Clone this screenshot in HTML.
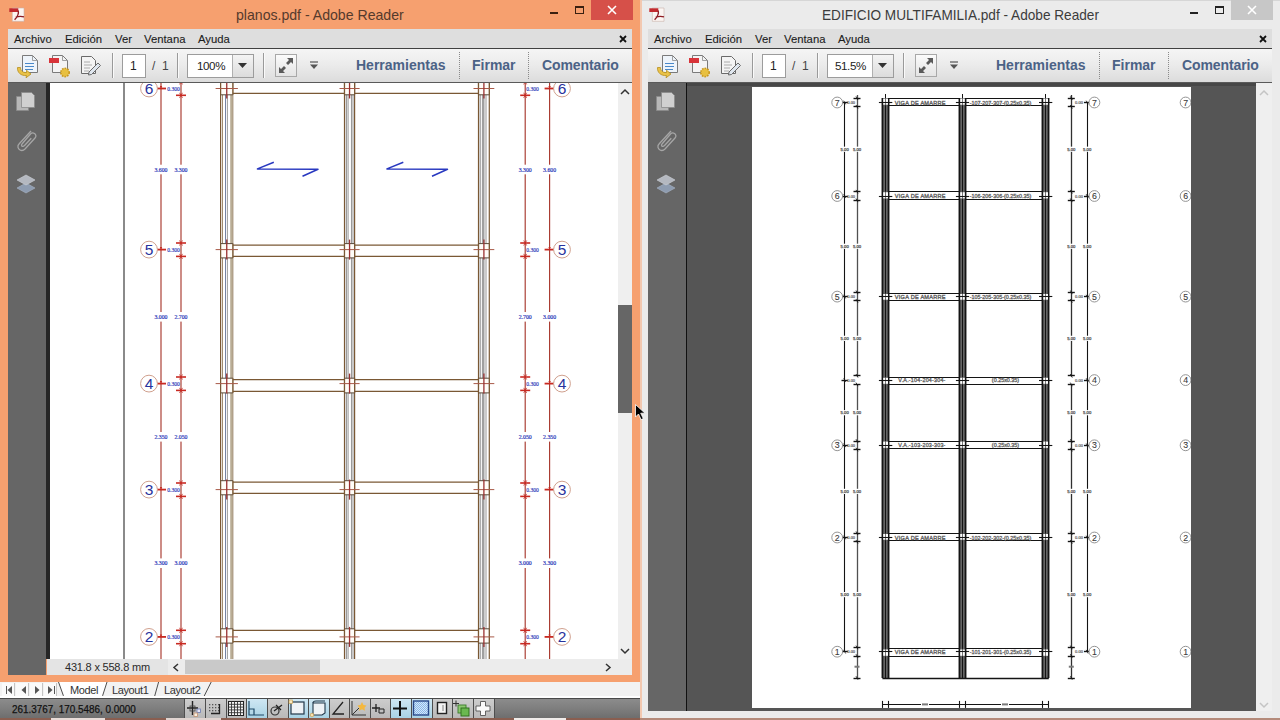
<!DOCTYPE html>
<html><head><meta charset="utf-8">
<style>
*{margin:0;padding:0;box-sizing:border-box}
html,body{width:1280px;height:720px;overflow:hidden;background:#efefef;font-family:"Liberation Sans",sans-serif}
.a{position:absolute}
.t{position:absolute;white-space:nowrap;line-height:1}
svg{position:absolute;overflow:visible}
</style></head><body>

<div class="a" style="left:0px;top:0px;width:640px;height:682px;background:#f6a06f;"></div>
<svg style="left:8px;top:6px" width="18" height="18" viewBox="0 0 18 18"><path d="M4.3 2h11.7v13.3h-11.7z" fill="#fbf5f2" stroke="#c8b0a8" stroke-width="0.6"/><rect x="1.3" y="2.3" width="9" height="3.7" fill="#c22a2e"/><path d="M10.2 4.5c.8 3-1 6.5-3.6 9.3 M7.8 11.2c2.6-1 5.5-1.2 8.2-.3" fill="none" stroke="#8e1a22" stroke-width="1.3"/></svg>
<div class="t" style="left:236px;top:8px;font-size:14.1px;color:#553a2c">planos.pdf - Adobe Reader</div>
<div class="a" style="left:591px;top:0px;width:42px;height:20px;background:#d65049;"></div>
<svg style="left:607px;top:5px" width="10" height="10" viewBox="0 0 10 10"><path d="M1 1L9 9M9 1L1 9" stroke="#fff" stroke-width="1.6"/></svg>
<div class="a" style="left:550px;top:12px;width:8px;height:2px;background:#3a2010;"></div>
<div class="a" style="left:575px;top:6px;width:9px;height:8px;border:1px solid #3a2010;border-top-width:2px"></div>
<div class="a" style="left:8px;top:48px;width:624px;height:35px;background:linear-gradient(#f5f5f5,#ececec 45%,#dcdcdc);border-top:1px solid #404040;border-bottom:1px solid #5a5a5a"></div>
<div class="a" style="left:8px;top:29px;width:624px;height:19px;background:#dedede;"></div>
<div class="t" style="left:14px;top:34px;font-size:11.3px;color:#1c1c1c;-webkit-text-stroke:0.1px #1c1c1c">Archivo</div>
<div class="t" style="left:65px;top:34px;font-size:11.3px;color:#1c1c1c;-webkit-text-stroke:0.1px #1c1c1c">Edición</div>
<div class="t" style="left:115px;top:34px;font-size:11.3px;color:#1c1c1c;-webkit-text-stroke:0.1px #1c1c1c">Ver</div>
<div class="t" style="left:144px;top:34px;font-size:11.3px;color:#1c1c1c;-webkit-text-stroke:0.1px #1c1c1c">Ventana</div>
<div class="t" style="left:198px;top:34px;font-size:11.3px;color:#1c1c1c;-webkit-text-stroke:0.1px #1c1c1c">Ayuda</div>
<svg style="left:619px;top:35px" width="8" height="8" viewBox="0 0 8 8"><path d="M1 1L7 7M7 1L1 7" stroke="#111" stroke-width="1.8"/></svg>
<svg style="left:16px;top:54px" width="26" height="24" viewBox="0 0 26 24"><path d="M6.5 1.5h10l5 5v12h-15z" fill="#eef4fa" stroke="#7a7a7a" stroke-width="1"/><path d="M16.5 1.5v5h5" fill="none" stroke="#8a8a8a" stroke-width="0.8"/><path d="M9 9.5h9M9 12.5h9M9 15.5h8" stroke="#4a88c8" stroke-width="1"/><path d="M1.5 13.5c-.5 5 3.5 8.5 9 8l-.5 2.3 5-3.8-4.5-3.8v2.2c-3.5 .5-6-1.5-6-4.9z" fill="#eac248" stroke="#b8901e" stroke-width="0.8"/></svg>
<svg style="left:47px;top:54px" width="26" height="24" viewBox="0 0 26 24"><path d="M5.5 1.5h10l5 5v12h-15z" fill="#f4f4f4" stroke="#7a7a7a" stroke-width="1"/><path d="M15.5 1.5v5h5" fill="none" stroke="#8a8a8a" stroke-width="0.8"/><rect x="2" y="4" width="10" height="5" fill="#d8343a"/><circle cx="18" cy="18.5" r="4.2" fill="#e8c040" stroke="#c89820" stroke-width="1.6" stroke-dasharray="1.6 1.1"/></svg>
<svg style="left:78px;top:54px" width="26" height="24" viewBox="0 0 26 24"><path d="M3.5 2.5h10l4 4v13h-14z" fill="#f4f4f4" stroke="#6a6a6a" stroke-width="1"/><path d="M6 8h6M6 11h8M6 14h6M6 17h5" stroke="#9a9a9a" stroke-width="0.8"/><path d="M11 18l9-9 2.5 2.5-9 9-3 .5z" fill="#dfe6ee" stroke="#6a6a6a" stroke-width="1"/></svg>
<div class="a" style="left:112px;top:53px;width:1px;height:25px;background:#9a9a9a;box-shadow:1px 0 0 #fafafa"></div>
<div class="a" style="left:177px;top:53px;width:1px;height:25px;background:#9a9a9a;box-shadow:1px 0 0 #fafafa"></div>
<div class="a" style="left:263px;top:53px;width:1px;height:25px;background:#9a9a9a;box-shadow:1px 0 0 #fafafa"></div>
<div class="a" style="left:122px;top:54px;width:24px;height:24px;background:#fff;border:1px solid #9c9c9c"></div>
<div class="t" style="left:130px;top:60px;font-size:12px;color:#222">1</div>
<div class="t" style="left:152px;top:60px;font-size:12px;color:#444">/&nbsp;&nbsp;1</div>
<div class="a" style="left:187px;top:54px;width:67px;height:24px;background:#fff;border:1px solid #9c9c9c"></div>
<div class="a" style="left:232px;top:55px;width:21px;height:22px;background:linear-gradient(#f4f4f4,#dcdcdc);border-left:1px solid #b0b0b0"></div>
<svg style="left:238px;top:63px" width="9" height="6"><path d="M0 0h9L4.5 5z" fill="#333"/></svg>
<div class="t" style="left:197px;top:60px;font-size:11.6px;color:#222;letter-spacing:-0.4px">100%</div>
<div class="a" style="left:275px;top:54px;width:22px;height:23px;background:linear-gradient(#fbfbfb,#e4e4e4);border:1px solid #a8a8a8"></div>
<svg style="left:277px;top:56px" width="18" height="19" viewBox="0 0 18 19"><path d="M10 2h6v6l-2-2-3 3-2-2 3-3z M8 17H2v-6l2 2 3-3 2 2-3 3z" fill="#5a5a5a"/></svg>
<svg style="left:309px;top:61px" width="10" height="9"><path d="M1 1h8" stroke="#555" stroke-width="1.2"/><path d="M1 3.5h8L5 8z" fill="#555"/></svg>
<div class="t" style="left:356px;top:58px;font-size:14px;font-weight:bold;color:#4b6286">Herramientas</div>
<div class="t" style="left:472px;top:58px;font-size:14px;font-weight:bold;color:#4b6286">Firmar</div>
<div class="t" style="left:542px;top:58px;font-size:14px;font-weight:bold;color:#4b6286;letter-spacing:-0.1px">Comentario</div>
<div class="a" style="left:459px;top:52px;width:1px;height:27px;border-left:1px dotted #8a8a8a"></div>
<div class="a" style="left:528px;top:52px;width:1px;height:27px;border-left:1px dotted #8a8a8a"></div>
<div class="a" style="left:8px;top:83px;width:38px;height:592px;background:#666666;"></div>
<svg style="left:14px;top:90px" width="24" height="24" viewBox="0 0 24 24"><path d="M2.5 6.5h10l2 2v12h-12z" fill="#b8b8b8" stroke="#8a8a8a" stroke-width="0.8"/><path d="M7.5 2.5h10l3 3v12h-13z" fill="#d0d0d0" stroke="#8a8a8a" stroke-width="0.8"/></svg>
<svg style="left:14px;top:127px" width="24" height="28" viewBox="0 0 24 28"><path d="M17 4L5 17c-2 2-1 5 1 6s4 0 5-1l10-11c1.5-1.5 1-3.5-.5-4.5s-3-.5-4 .5L8 17c-.8.8-.5 2 .3 2.3s1.5 0 2-.6l7-7.5" fill="none" stroke="#a6a6a6" stroke-width="1.3"/></svg>
<svg style="left:14px;top:172px" width="24" height="24" viewBox="0 0 24 24"><path d="M12 11l9 5-9 5-9-5z" fill="#8e9cb0" stroke="#a8b4c4" stroke-width="0.6"/><path d="M12 3l9 5-9 5-9-5z" fill="#b4b8c0" stroke="#ccd0d6" stroke-width="0.6"/></svg>
<div class="a" style="left:46px;top:83px;width:4px;height:576px;background:#262626;"></div>
<div class="a" style="left:50px;top:83px;width:568px;height:576px;background:#ffffff;"></div>
<svg style="left:0;top:0" width="1280" height="720" viewBox="0 0 1280 720"><defs><clipPath id="cl"><rect x="50" y="83" width="568" height="576"/></clipPath></defs><g clip-path="url(#cl)"><line x1="124" y1="83" x2="124" y2="659" stroke="#8a8a8a" stroke-width="2" /><line x1="161" y1="83" x2="161" y2="659" stroke="#a8382e" stroke-width="1.15" /><line x1="181" y1="83" x2="181" y2="659" stroke="#a8382e" stroke-width="1.15" /><line x1="525.2" y1="83" x2="525.2" y2="659" stroke="#a8382e" stroke-width="1.15" /><line x1="549.6" y1="83" x2="549.6" y2="659" stroke="#a8382e" stroke-width="1.15" /><rect x="159" y="164.7" width="4" height="9.6" fill="#fff"/><text x="161" y="171.5" font-size="5.8" fill="#2a36b8" text-anchor="middle" font-family="Liberation Serif" stroke="#2a36b8" stroke-width="0.2">3.600</text><rect x="159" y="312.0" width="4" height="9.6" fill="#fff"/><text x="161" y="318.8" font-size="5.8" fill="#2a36b8" text-anchor="middle" font-family="Liberation Serif" stroke="#2a36b8" stroke-width="0.2">3.000</text><rect x="159" y="432.0" width="4" height="9.6" fill="#fff"/><text x="161" y="438.8" font-size="5.8" fill="#2a36b8" text-anchor="middle" font-family="Liberation Serif" stroke="#2a36b8" stroke-width="0.2">2.350</text><rect x="159" y="558.4000000000001" width="4" height="9.6" fill="#fff"/><text x="161" y="565.2" font-size="5.8" fill="#2a36b8" text-anchor="middle" font-family="Liberation Serif" stroke="#2a36b8" stroke-width="0.2">3.300</text><rect x="179" y="164.7" width="4" height="9.6" fill="#fff"/><text x="181" y="171.5" font-size="5.8" fill="#2a36b8" text-anchor="middle" font-family="Liberation Serif" stroke="#2a36b8" stroke-width="0.2">3.300</text><rect x="179" y="312.0" width="4" height="9.6" fill="#fff"/><text x="181" y="318.8" font-size="5.8" fill="#2a36b8" text-anchor="middle" font-family="Liberation Serif" stroke="#2a36b8" stroke-width="0.2">2.700</text><rect x="179" y="432.0" width="4" height="9.6" fill="#fff"/><text x="181" y="438.8" font-size="5.8" fill="#2a36b8" text-anchor="middle" font-family="Liberation Serif" stroke="#2a36b8" stroke-width="0.2">2.050</text><rect x="179" y="558.4000000000001" width="4" height="9.6" fill="#fff"/><text x="181" y="565.2" font-size="5.8" fill="#2a36b8" text-anchor="middle" font-family="Liberation Serif" stroke="#2a36b8" stroke-width="0.2">3.000</text><rect x="523.2" y="164.7" width="4" height="9.6" fill="#fff"/><text x="525.2" y="171.5" font-size="5.8" fill="#2a36b8" text-anchor="middle" font-family="Liberation Serif" stroke="#2a36b8" stroke-width="0.2">3.300</text><rect x="523.2" y="312.0" width="4" height="9.6" fill="#fff"/><text x="525.2" y="318.8" font-size="5.8" fill="#2a36b8" text-anchor="middle" font-family="Liberation Serif" stroke="#2a36b8" stroke-width="0.2">2.700</text><rect x="523.2" y="432.0" width="4" height="9.6" fill="#fff"/><text x="525.2" y="438.8" font-size="5.8" fill="#2a36b8" text-anchor="middle" font-family="Liberation Serif" stroke="#2a36b8" stroke-width="0.2">2.050</text><rect x="523.2" y="558.4000000000001" width="4" height="9.6" fill="#fff"/><text x="525.2" y="565.2" font-size="5.8" fill="#2a36b8" text-anchor="middle" font-family="Liberation Serif" stroke="#2a36b8" stroke-width="0.2">3.000</text><rect x="547.6" y="164.7" width="4" height="9.6" fill="#fff"/><text x="549.6" y="171.5" font-size="5.8" fill="#2a36b8" text-anchor="middle" font-family="Liberation Serif" stroke="#2a36b8" stroke-width="0.2">3.600</text><rect x="547.6" y="312.0" width="4" height="9.6" fill="#fff"/><text x="549.6" y="318.8" font-size="5.8" fill="#2a36b8" text-anchor="middle" font-family="Liberation Serif" stroke="#2a36b8" stroke-width="0.2">3.000</text><rect x="547.6" y="432.0" width="4" height="9.6" fill="#fff"/><text x="549.6" y="438.8" font-size="5.8" fill="#2a36b8" text-anchor="middle" font-family="Liberation Serif" stroke="#2a36b8" stroke-width="0.2">2.350</text><rect x="547.6" y="558.4000000000001" width="4" height="9.6" fill="#fff"/><text x="549.6" y="565.2" font-size="5.8" fill="#2a36b8" text-anchor="middle" font-family="Liberation Serif" stroke="#2a36b8" stroke-width="0.2">3.300</text><line x1="156" y1="88.5" x2="166" y2="88.5" stroke="#c82a22" stroke-width="1.8" /><path d="M159.8 86.0L161 88.5L162.2 86.0z" fill="#c82a22"/><line x1="544.6" y1="88.5" x2="554.6" y2="88.5" stroke="#c82a22" stroke-width="1.8" /><path d="M548.4 86.0L549.6 88.5L550.8000000000001 86.0z" fill="#c82a22"/><circle cx="149" cy="88.5" r="8.4" fill="#fff" stroke="#d0a08e" stroke-width="1"/><text x="149" y="94.0" font-size="15.5" fill="#28329c" text-anchor="middle" font-family="Liberation Sans" >6</text><circle cx="562" cy="88.5" r="8.4" fill="#fff" stroke="#d0a08e" stroke-width="1"/><text x="562" y="94.0" font-size="15.5" fill="#28329c" text-anchor="middle" font-family="Liberation Sans" >6</text><line x1="176" y1="81.9" x2="186" y2="81.9" stroke="#c82a22" stroke-width="1.6" /><path d="M179.5 79.4L182.5 84.4M182.5 79.4L179.5 84.4" stroke="#c82a22" stroke-width="0.8"/><line x1="176" y1="95.3" x2="186" y2="95.3" stroke="#c82a22" stroke-width="1.6" /><path d="M179.5 92.8L182.5 97.8M182.5 92.8L179.5 97.8" stroke="#c82a22" stroke-width="0.8"/><line x1="520.2" y1="81.9" x2="530.2" y2="81.9" stroke="#c82a22" stroke-width="1.6" /><path d="M523.7 79.4L526.7 84.4M526.7 79.4L523.7 84.4" stroke="#c82a22" stroke-width="0.8"/><line x1="520.2" y1="95.3" x2="530.2" y2="95.3" stroke="#c82a22" stroke-width="1.6" /><path d="M523.7 92.8L526.7 97.8M526.7 92.8L523.7 97.8" stroke="#c82a22" stroke-width="0.8"/><text x="173.5" y="90.5" font-size="5.6" fill="#2a36b8" text-anchor="middle" font-family="Liberation Serif" stroke="#2a36b8" stroke-width="0.15">0.300</text><text x="532.5" y="90.5" font-size="5.6" fill="#2a36b8" text-anchor="middle" font-family="Liberation Serif" stroke="#2a36b8" stroke-width="0.15">0.300</text><line x1="156" y1="249.6" x2="166" y2="249.6" stroke="#c82a22" stroke-width="1.8" /><path d="M159.8 247.1L161 249.6L162.2 247.1z" fill="#c82a22"/><line x1="544.6" y1="249.6" x2="554.6" y2="249.6" stroke="#c82a22" stroke-width="1.8" /><path d="M548.4 247.1L549.6 249.6L550.8000000000001 247.1z" fill="#c82a22"/><circle cx="149" cy="249.6" r="8.4" fill="#fff" stroke="#d0a08e" stroke-width="1"/><text x="149" y="255.1" font-size="15.5" fill="#28329c" text-anchor="middle" font-family="Liberation Sans" >5</text><circle cx="562" cy="249.6" r="8.4" fill="#fff" stroke="#d0a08e" stroke-width="1"/><text x="562" y="255.1" font-size="15.5" fill="#28329c" text-anchor="middle" font-family="Liberation Sans" >5</text><line x1="176" y1="243.0" x2="186" y2="243.0" stroke="#c82a22" stroke-width="1.6" /><path d="M179.5 240.5L182.5 245.5M182.5 240.5L179.5 245.5" stroke="#c82a22" stroke-width="0.8"/><line x1="176" y1="256.4" x2="186" y2="256.4" stroke="#c82a22" stroke-width="1.6" /><path d="M179.5 253.89999999999998L182.5 258.9M182.5 253.89999999999998L179.5 258.9" stroke="#c82a22" stroke-width="0.8"/><line x1="520.2" y1="243.0" x2="530.2" y2="243.0" stroke="#c82a22" stroke-width="1.6" /><path d="M523.7 240.5L526.7 245.5M526.7 240.5L523.7 245.5" stroke="#c82a22" stroke-width="0.8"/><line x1="520.2" y1="256.4" x2="530.2" y2="256.4" stroke="#c82a22" stroke-width="1.6" /><path d="M523.7 253.89999999999998L526.7 258.9M526.7 253.89999999999998L523.7 258.9" stroke="#c82a22" stroke-width="0.8"/><text x="173.5" y="251.6" font-size="5.6" fill="#2a36b8" text-anchor="middle" font-family="Liberation Serif" stroke="#2a36b8" stroke-width="0.15">0.300</text><text x="532.5" y="251.6" font-size="5.6" fill="#2a36b8" text-anchor="middle" font-family="Liberation Serif" stroke="#2a36b8" stroke-width="0.15">0.300</text><line x1="156" y1="383.6" x2="166" y2="383.6" stroke="#c82a22" stroke-width="1.8" /><path d="M159.8 381.1L161 383.6L162.2 381.1z" fill="#c82a22"/><line x1="544.6" y1="383.6" x2="554.6" y2="383.6" stroke="#c82a22" stroke-width="1.8" /><path d="M548.4 381.1L549.6 383.6L550.8000000000001 381.1z" fill="#c82a22"/><circle cx="149" cy="383.6" r="8.4" fill="#fff" stroke="#d0a08e" stroke-width="1"/><text x="149" y="389.1" font-size="15.5" fill="#28329c" text-anchor="middle" font-family="Liberation Sans" >4</text><circle cx="562" cy="383.6" r="8.4" fill="#fff" stroke="#d0a08e" stroke-width="1"/><text x="562" y="389.1" font-size="15.5" fill="#28329c" text-anchor="middle" font-family="Liberation Sans" >4</text><line x1="176" y1="377.0" x2="186" y2="377.0" stroke="#c82a22" stroke-width="1.6" /><path d="M179.5 374.5L182.5 379.5M182.5 374.5L179.5 379.5" stroke="#c82a22" stroke-width="0.8"/><line x1="176" y1="390.40000000000003" x2="186" y2="390.40000000000003" stroke="#c82a22" stroke-width="1.6" /><path d="M179.5 387.90000000000003L182.5 392.90000000000003M182.5 387.90000000000003L179.5 392.90000000000003" stroke="#c82a22" stroke-width="0.8"/><line x1="520.2" y1="377.0" x2="530.2" y2="377.0" stroke="#c82a22" stroke-width="1.6" /><path d="M523.7 374.5L526.7 379.5M526.7 374.5L523.7 379.5" stroke="#c82a22" stroke-width="0.8"/><line x1="520.2" y1="390.40000000000003" x2="530.2" y2="390.40000000000003" stroke="#c82a22" stroke-width="1.6" /><path d="M523.7 387.90000000000003L526.7 392.90000000000003M526.7 387.90000000000003L523.7 392.90000000000003" stroke="#c82a22" stroke-width="0.8"/><text x="173.5" y="385.6" font-size="5.6" fill="#2a36b8" text-anchor="middle" font-family="Liberation Serif" stroke="#2a36b8" stroke-width="0.15">0.300</text><text x="532.5" y="385.6" font-size="5.6" fill="#2a36b8" text-anchor="middle" font-family="Liberation Serif" stroke="#2a36b8" stroke-width="0.15">0.300</text><line x1="156" y1="489.6" x2="166" y2="489.6" stroke="#c82a22" stroke-width="1.8" /><path d="M159.8 487.1L161 489.6L162.2 487.1z" fill="#c82a22"/><line x1="544.6" y1="489.6" x2="554.6" y2="489.6" stroke="#c82a22" stroke-width="1.8" /><path d="M548.4 487.1L549.6 489.6L550.8000000000001 487.1z" fill="#c82a22"/><circle cx="149" cy="489.6" r="8.4" fill="#fff" stroke="#d0a08e" stroke-width="1"/><text x="149" y="495.1" font-size="15.5" fill="#28329c" text-anchor="middle" font-family="Liberation Sans" >3</text><circle cx="562" cy="489.6" r="8.4" fill="#fff" stroke="#d0a08e" stroke-width="1"/><text x="562" y="495.1" font-size="15.5" fill="#28329c" text-anchor="middle" font-family="Liberation Sans" >3</text><line x1="176" y1="483.0" x2="186" y2="483.0" stroke="#c82a22" stroke-width="1.6" /><path d="M179.5 480.5L182.5 485.5M182.5 480.5L179.5 485.5" stroke="#c82a22" stroke-width="0.8"/><line x1="176" y1="496.40000000000003" x2="186" y2="496.40000000000003" stroke="#c82a22" stroke-width="1.6" /><path d="M179.5 493.90000000000003L182.5 498.90000000000003M182.5 493.90000000000003L179.5 498.90000000000003" stroke="#c82a22" stroke-width="0.8"/><line x1="520.2" y1="483.0" x2="530.2" y2="483.0" stroke="#c82a22" stroke-width="1.6" /><path d="M523.7 480.5L526.7 485.5M526.7 480.5L523.7 485.5" stroke="#c82a22" stroke-width="0.8"/><line x1="520.2" y1="496.40000000000003" x2="530.2" y2="496.40000000000003" stroke="#c82a22" stroke-width="1.6" /><path d="M523.7 493.90000000000003L526.7 498.90000000000003M526.7 493.90000000000003L523.7 498.90000000000003" stroke="#c82a22" stroke-width="0.8"/><text x="173.5" y="491.6" font-size="5.6" fill="#2a36b8" text-anchor="middle" font-family="Liberation Serif" stroke="#2a36b8" stroke-width="0.15">0.300</text><text x="532.5" y="491.6" font-size="5.6" fill="#2a36b8" text-anchor="middle" font-family="Liberation Serif" stroke="#2a36b8" stroke-width="0.15">0.300</text><line x1="156" y1="636.9" x2="166" y2="636.9" stroke="#c82a22" stroke-width="1.8" /><path d="M159.8 634.4L161 636.9L162.2 634.4z" fill="#c82a22"/><line x1="544.6" y1="636.9" x2="554.6" y2="636.9" stroke="#c82a22" stroke-width="1.8" /><path d="M548.4 634.4L549.6 636.9L550.8000000000001 634.4z" fill="#c82a22"/><circle cx="149" cy="636.9" r="8.4" fill="#fff" stroke="#d0a08e" stroke-width="1"/><text x="149" y="642.4" font-size="15.5" fill="#28329c" text-anchor="middle" font-family="Liberation Sans" >2</text><circle cx="562" cy="636.9" r="8.4" fill="#fff" stroke="#d0a08e" stroke-width="1"/><text x="562" y="642.4" font-size="15.5" fill="#28329c" text-anchor="middle" font-family="Liberation Sans" >2</text><line x1="176" y1="630.3" x2="186" y2="630.3" stroke="#c82a22" stroke-width="1.6" /><path d="M179.5 627.8L182.5 632.8M182.5 627.8L179.5 632.8" stroke="#c82a22" stroke-width="0.8"/><line x1="176" y1="643.6999999999999" x2="186" y2="643.6999999999999" stroke="#c82a22" stroke-width="1.6" /><path d="M179.5 641.1999999999999L182.5 646.1999999999999M182.5 641.1999999999999L179.5 646.1999999999999" stroke="#c82a22" stroke-width="0.8"/><line x1="520.2" y1="630.3" x2="530.2" y2="630.3" stroke="#c82a22" stroke-width="1.6" /><path d="M523.7 627.8L526.7 632.8M526.7 627.8L523.7 632.8" stroke="#c82a22" stroke-width="0.8"/><line x1="520.2" y1="643.6999999999999" x2="530.2" y2="643.6999999999999" stroke="#c82a22" stroke-width="1.6" /><path d="M523.7 641.1999999999999L526.7 646.1999999999999M526.7 641.1999999999999L523.7 646.1999999999999" stroke="#c82a22" stroke-width="0.8"/><text x="173.5" y="638.9" font-size="5.6" fill="#2a36b8" text-anchor="middle" font-family="Liberation Serif" stroke="#2a36b8" stroke-width="0.15">0.300</text><text x="532.5" y="638.9" font-size="5.6" fill="#2a36b8" text-anchor="middle" font-family="Liberation Serif" stroke="#2a36b8" stroke-width="0.15">0.300</text><line x1="220.6" y1="83" x2="220.6" y2="659" stroke="#7a5834" stroke-width="1.2" /><line x1="222.5" y1="83" x2="222.5" y2="659" stroke="#a08c70" stroke-width="1" /><line x1="225.5" y1="83" x2="225.5" y2="659" stroke="#7684a4" stroke-width="1" /><line x1="227.4" y1="83" x2="227.4" y2="659" stroke="#9c9c9c" stroke-width="1" /><line x1="231.4" y1="83" x2="231.4" y2="659" stroke="#b9ad95" stroke-width="2.4" /><line x1="232.9" y1="83" x2="232.9" y2="659" stroke="#8a7050" stroke-width="0.8" /><line x1="344.5" y1="83" x2="344.5" y2="659" stroke="#7a5834" stroke-width="1.2" /><line x1="346.4" y1="83" x2="346.4" y2="659" stroke="#9a9a9a" stroke-width="1.3" /><line x1="348.1" y1="83" x2="348.1" y2="659" stroke="#a6a6a6" stroke-width="1.2" /><line x1="351.6" y1="83" x2="351.6" y2="659" stroke="#9a9a9a" stroke-width="1.3" /><line x1="353.1" y1="83" x2="353.1" y2="659" stroke="#a8a8a8" stroke-width="1.1" /><line x1="354.6" y1="83" x2="354.6" y2="659" stroke="#7a5834" stroke-width="1.2" /><line x1="478.5" y1="83" x2="478.5" y2="659" stroke="#7a5834" stroke-width="1.2" /><line x1="480.2" y1="83" x2="480.2" y2="659" stroke="#9a9a9a" stroke-width="1.2" /><line x1="483.2" y1="83" x2="483.2" y2="659" stroke="#a0a0a0" stroke-width="2.6" /><line x1="486" y1="83" x2="486" y2="659" stroke="#a8a8a8" stroke-width="1.2" /><line x1="489.3" y1="83" x2="489.3" y2="659" stroke="#7a5834" stroke-width="1.2" /><line x1="232.9" y1="81.5" x2="344.5" y2="81.5" stroke="#7a5834" stroke-width="1.2" /><line x1="354.6" y1="81.5" x2="478.5" y2="81.5" stroke="#7a5834" stroke-width="1.2" /><line x1="232.9" y1="93.3" x2="344.5" y2="93.3" stroke="#7a5834" stroke-width="1.2" /><line x1="354.6" y1="93.3" x2="478.5" y2="93.3" stroke="#7a5834" stroke-width="1.2" /><rect x="221.2" y="80.0" width="11.100000000000012" height="14.799999999999997" fill="#fffdf8"/><line x1="220.6" y1="80.0" x2="232.9" y2="80.0" stroke="#5a4a3a" stroke-width="1" /><line x1="220.6" y1="94.8" x2="232.9" y2="94.8" stroke="#5a4a3a" stroke-width="1" /><line x1="220.6" y1="80.0" x2="220.6" y2="94.8" stroke="#7a5834" stroke-width="1.2" /><line x1="232.9" y1="80.0" x2="232.9" y2="94.8" stroke="#7a5834" stroke-width="1.2" /><line x1="215.6" y1="88.5" x2="237.9" y2="88.5" stroke="#a85a48" stroke-width="1.0" /><line x1="226.75" y1="78.5" x2="226.75" y2="98.5" stroke="#9a3030" stroke-width="1.3" /><rect x="345.1" y="80.0" width="8.900000000000023" height="14.799999999999997" fill="#fffdf8"/><line x1="344.5" y1="80.0" x2="354.6" y2="80.0" stroke="#5a4a3a" stroke-width="1" /><line x1="344.5" y1="94.8" x2="354.6" y2="94.8" stroke="#5a4a3a" stroke-width="1" /><line x1="344.5" y1="80.0" x2="344.5" y2="94.8" stroke="#7a5834" stroke-width="1.2" /><line x1="354.6" y1="80.0" x2="354.6" y2="94.8" stroke="#7a5834" stroke-width="1.2" /><line x1="339.5" y1="88.5" x2="359.6" y2="88.5" stroke="#a85a48" stroke-width="1.0" /><line x1="349.55" y1="78.5" x2="349.55" y2="98.5" stroke="#9a3030" stroke-width="1.3" /><rect x="479.1" y="80.0" width="9.600000000000012" height="14.799999999999997" fill="#fffdf8"/><line x1="478.5" y1="80.0" x2="489.3" y2="80.0" stroke="#5a4a3a" stroke-width="1" /><line x1="478.5" y1="94.8" x2="489.3" y2="94.8" stroke="#5a4a3a" stroke-width="1" /><line x1="478.5" y1="80.0" x2="478.5" y2="94.8" stroke="#7a5834" stroke-width="1.2" /><line x1="489.3" y1="80.0" x2="489.3" y2="94.8" stroke="#7a5834" stroke-width="1.2" /><line x1="473.5" y1="88.5" x2="494.3" y2="88.5" stroke="#a85a48" stroke-width="1.0" /><line x1="483.9" y1="78.5" x2="483.9" y2="98.5" stroke="#9a3030" stroke-width="1.3" /><line x1="232.9" y1="245.1" x2="344.5" y2="245.1" stroke="#7a5834" stroke-width="1.2" /><line x1="354.6" y1="245.1" x2="478.5" y2="245.1" stroke="#7a5834" stroke-width="1.2" /><line x1="232.9" y1="256.4" x2="344.5" y2="256.4" stroke="#7a5834" stroke-width="1.2" /><line x1="354.6" y1="256.4" x2="478.5" y2="256.4" stroke="#7a5834" stroke-width="1.2" /><rect x="221.2" y="243.6" width="11.100000000000012" height="14.299999999999983" fill="#fffdf8"/><line x1="220.6" y1="243.6" x2="232.9" y2="243.6" stroke="#5a4a3a" stroke-width="1" /><line x1="220.6" y1="257.9" x2="232.9" y2="257.9" stroke="#5a4a3a" stroke-width="1" /><line x1="220.6" y1="243.6" x2="220.6" y2="257.9" stroke="#7a5834" stroke-width="1.2" /><line x1="232.9" y1="243.6" x2="232.9" y2="257.9" stroke="#7a5834" stroke-width="1.2" /><line x1="215.6" y1="249.6" x2="237.9" y2="249.6" stroke="#a85a48" stroke-width="1.0" /><line x1="226.75" y1="239.6" x2="226.75" y2="259.6" stroke="#9a3030" stroke-width="1.3" /><rect x="345.1" y="243.6" width="8.900000000000023" height="14.299999999999983" fill="#fffdf8"/><line x1="344.5" y1="243.6" x2="354.6" y2="243.6" stroke="#5a4a3a" stroke-width="1" /><line x1="344.5" y1="257.9" x2="354.6" y2="257.9" stroke="#5a4a3a" stroke-width="1" /><line x1="344.5" y1="243.6" x2="344.5" y2="257.9" stroke="#7a5834" stroke-width="1.2" /><line x1="354.6" y1="243.6" x2="354.6" y2="257.9" stroke="#7a5834" stroke-width="1.2" /><line x1="339.5" y1="249.6" x2="359.6" y2="249.6" stroke="#a85a48" stroke-width="1.0" /><line x1="349.55" y1="239.6" x2="349.55" y2="259.6" stroke="#9a3030" stroke-width="1.3" /><rect x="479.1" y="243.6" width="9.600000000000012" height="14.299999999999983" fill="#fffdf8"/><line x1="478.5" y1="243.6" x2="489.3" y2="243.6" stroke="#5a4a3a" stroke-width="1" /><line x1="478.5" y1="257.9" x2="489.3" y2="257.9" stroke="#5a4a3a" stroke-width="1" /><line x1="478.5" y1="243.6" x2="478.5" y2="257.9" stroke="#7a5834" stroke-width="1.2" /><line x1="489.3" y1="243.6" x2="489.3" y2="257.9" stroke="#7a5834" stroke-width="1.2" /><line x1="473.5" y1="249.6" x2="494.3" y2="249.6" stroke="#a85a48" stroke-width="1.0" /><line x1="483.9" y1="239.6" x2="483.9" y2="259.6" stroke="#9a3030" stroke-width="1.3" /><line x1="232.9" y1="379.7" x2="344.5" y2="379.7" stroke="#7a5834" stroke-width="1.2" /><line x1="354.6" y1="379.7" x2="478.5" y2="379.7" stroke="#7a5834" stroke-width="1.2" /><line x1="232.9" y1="391.4" x2="344.5" y2="391.4" stroke="#7a5834" stroke-width="1.2" /><line x1="354.6" y1="391.4" x2="478.5" y2="391.4" stroke="#7a5834" stroke-width="1.2" /><rect x="221.2" y="378.2" width="11.100000000000012" height="14.699999999999989" fill="#fffdf8"/><line x1="220.6" y1="378.2" x2="232.9" y2="378.2" stroke="#5a4a3a" stroke-width="1" /><line x1="220.6" y1="392.9" x2="232.9" y2="392.9" stroke="#5a4a3a" stroke-width="1" /><line x1="220.6" y1="378.2" x2="220.6" y2="392.9" stroke="#7a5834" stroke-width="1.2" /><line x1="232.9" y1="378.2" x2="232.9" y2="392.9" stroke="#7a5834" stroke-width="1.2" /><line x1="215.6" y1="383.6" x2="237.9" y2="383.6" stroke="#a85a48" stroke-width="1.0" /><line x1="226.75" y1="373.6" x2="226.75" y2="393.6" stroke="#9a3030" stroke-width="1.3" /><rect x="345.1" y="378.2" width="8.900000000000023" height="14.699999999999989" fill="#fffdf8"/><line x1="344.5" y1="378.2" x2="354.6" y2="378.2" stroke="#5a4a3a" stroke-width="1" /><line x1="344.5" y1="392.9" x2="354.6" y2="392.9" stroke="#5a4a3a" stroke-width="1" /><line x1="344.5" y1="378.2" x2="344.5" y2="392.9" stroke="#7a5834" stroke-width="1.2" /><line x1="354.6" y1="378.2" x2="354.6" y2="392.9" stroke="#7a5834" stroke-width="1.2" /><line x1="339.5" y1="383.6" x2="359.6" y2="383.6" stroke="#a85a48" stroke-width="1.0" /><line x1="349.55" y1="373.6" x2="349.55" y2="393.6" stroke="#9a3030" stroke-width="1.3" /><rect x="479.1" y="378.2" width="9.600000000000012" height="14.699999999999989" fill="#fffdf8"/><line x1="478.5" y1="378.2" x2="489.3" y2="378.2" stroke="#5a4a3a" stroke-width="1" /><line x1="478.5" y1="392.9" x2="489.3" y2="392.9" stroke="#5a4a3a" stroke-width="1" /><line x1="478.5" y1="378.2" x2="478.5" y2="392.9" stroke="#7a5834" stroke-width="1.2" /><line x1="489.3" y1="378.2" x2="489.3" y2="392.9" stroke="#7a5834" stroke-width="1.2" /><line x1="473.5" y1="383.6" x2="494.3" y2="383.6" stroke="#a85a48" stroke-width="1.0" /><line x1="483.9" y1="373.6" x2="483.9" y2="393.6" stroke="#9a3030" stroke-width="1.3" /><line x1="232.9" y1="482.2" x2="344.5" y2="482.2" stroke="#7a5834" stroke-width="1.2" /><line x1="354.6" y1="482.2" x2="478.5" y2="482.2" stroke="#7a5834" stroke-width="1.2" /><line x1="232.9" y1="493.3" x2="344.5" y2="493.3" stroke="#7a5834" stroke-width="1.2" /><line x1="354.6" y1="493.3" x2="478.5" y2="493.3" stroke="#7a5834" stroke-width="1.2" /><rect x="221.2" y="480.7" width="11.100000000000012" height="14.100000000000023" fill="#fffdf8"/><line x1="220.6" y1="480.7" x2="232.9" y2="480.7" stroke="#5a4a3a" stroke-width="1" /><line x1="220.6" y1="494.8" x2="232.9" y2="494.8" stroke="#5a4a3a" stroke-width="1" /><line x1="220.6" y1="480.7" x2="220.6" y2="494.8" stroke="#7a5834" stroke-width="1.2" /><line x1="232.9" y1="480.7" x2="232.9" y2="494.8" stroke="#7a5834" stroke-width="1.2" /><line x1="215.6" y1="489.6" x2="237.9" y2="489.6" stroke="#a85a48" stroke-width="1.0" /><line x1="226.75" y1="479.6" x2="226.75" y2="499.6" stroke="#9a3030" stroke-width="1.3" /><rect x="345.1" y="480.7" width="8.900000000000023" height="14.100000000000023" fill="#fffdf8"/><line x1="344.5" y1="480.7" x2="354.6" y2="480.7" stroke="#5a4a3a" stroke-width="1" /><line x1="344.5" y1="494.8" x2="354.6" y2="494.8" stroke="#5a4a3a" stroke-width="1" /><line x1="344.5" y1="480.7" x2="344.5" y2="494.8" stroke="#7a5834" stroke-width="1.2" /><line x1="354.6" y1="480.7" x2="354.6" y2="494.8" stroke="#7a5834" stroke-width="1.2" /><line x1="339.5" y1="489.6" x2="359.6" y2="489.6" stroke="#a85a48" stroke-width="1.0" /><line x1="349.55" y1="479.6" x2="349.55" y2="499.6" stroke="#9a3030" stroke-width="1.3" /><rect x="479.1" y="480.7" width="9.600000000000012" height="14.100000000000023" fill="#fffdf8"/><line x1="478.5" y1="480.7" x2="489.3" y2="480.7" stroke="#5a4a3a" stroke-width="1" /><line x1="478.5" y1="494.8" x2="489.3" y2="494.8" stroke="#5a4a3a" stroke-width="1" /><line x1="478.5" y1="480.7" x2="478.5" y2="494.8" stroke="#7a5834" stroke-width="1.2" /><line x1="489.3" y1="480.7" x2="489.3" y2="494.8" stroke="#7a5834" stroke-width="1.2" /><line x1="473.5" y1="489.6" x2="494.3" y2="489.6" stroke="#a85a48" stroke-width="1.0" /><line x1="483.9" y1="479.6" x2="483.9" y2="499.6" stroke="#9a3030" stroke-width="1.3" /><line x1="232.9" y1="630.3" x2="344.5" y2="630.3" stroke="#7a5834" stroke-width="1.2" /><line x1="354.6" y1="630.3" x2="478.5" y2="630.3" stroke="#7a5834" stroke-width="1.2" /><line x1="232.9" y1="641.6" x2="344.5" y2="641.6" stroke="#7a5834" stroke-width="1.2" /><line x1="354.6" y1="641.6" x2="478.5" y2="641.6" stroke="#7a5834" stroke-width="1.2" /><rect x="221.2" y="628.8" width="11.100000000000012" height="14.300000000000068" fill="#fffdf8"/><line x1="220.6" y1="628.8" x2="232.9" y2="628.8" stroke="#5a4a3a" stroke-width="1" /><line x1="220.6" y1="643.1" x2="232.9" y2="643.1" stroke="#5a4a3a" stroke-width="1" /><line x1="220.6" y1="628.8" x2="220.6" y2="643.1" stroke="#7a5834" stroke-width="1.2" /><line x1="232.9" y1="628.8" x2="232.9" y2="643.1" stroke="#7a5834" stroke-width="1.2" /><line x1="215.6" y1="636.9" x2="237.9" y2="636.9" stroke="#a85a48" stroke-width="1.0" /><line x1="226.75" y1="626.9" x2="226.75" y2="646.9" stroke="#9a3030" stroke-width="1.3" /><rect x="345.1" y="628.8" width="8.900000000000023" height="14.300000000000068" fill="#fffdf8"/><line x1="344.5" y1="628.8" x2="354.6" y2="628.8" stroke="#5a4a3a" stroke-width="1" /><line x1="344.5" y1="643.1" x2="354.6" y2="643.1" stroke="#5a4a3a" stroke-width="1" /><line x1="344.5" y1="628.8" x2="344.5" y2="643.1" stroke="#7a5834" stroke-width="1.2" /><line x1="354.6" y1="628.8" x2="354.6" y2="643.1" stroke="#7a5834" stroke-width="1.2" /><line x1="339.5" y1="636.9" x2="359.6" y2="636.9" stroke="#a85a48" stroke-width="1.0" /><line x1="349.55" y1="626.9" x2="349.55" y2="646.9" stroke="#9a3030" stroke-width="1.3" /><rect x="479.1" y="628.8" width="9.600000000000012" height="14.300000000000068" fill="#fffdf8"/><line x1="478.5" y1="628.8" x2="489.3" y2="628.8" stroke="#5a4a3a" stroke-width="1" /><line x1="478.5" y1="643.1" x2="489.3" y2="643.1" stroke="#5a4a3a" stroke-width="1" /><line x1="478.5" y1="628.8" x2="478.5" y2="643.1" stroke="#7a5834" stroke-width="1.2" /><line x1="489.3" y1="628.8" x2="489.3" y2="643.1" stroke="#7a5834" stroke-width="1.2" /><line x1="473.5" y1="636.9" x2="494.3" y2="636.9" stroke="#a85a48" stroke-width="1.0" /><line x1="483.9" y1="626.9" x2="483.9" y2="646.9" stroke="#9a3030" stroke-width="1.3" /><polyline points="273.8,162.3 257.4,168.9 318,169.3 302.5,176.2" fill="none" stroke="#2838c0" stroke-width="1.5" stroke-linejoin="round"/><polyline points="403.3,162.3 386.9,168.9 447.5,169.3 432,176.2" fill="none" stroke="#2838c0" stroke-width="1.5" stroke-linejoin="round"/></g></svg>
<div class="a" style="left:618px;top:83px;width:14px;height:576px;background:#efefef;"></div>
<div class="a" style="left:618px;top:305px;width:14px;height:108px;background:#666;"></div>
<svg style="left:620px;top:88px" width="10" height="7"><path d="M1 6L5 2l4 4" fill="none" stroke="#333" stroke-width="1.5"/></svg>
<svg style="left:620px;top:648px" width="10" height="7"><path d="M1 1l4 4 4-4" fill="none" stroke="#333" stroke-width="1.5"/></svg>
<div class="a" style="left:47px;top:659px;width:585px;height:16px;background:#e4e4e4;"></div>
<div class="t" style="left:65px;top:662px;font-size:11px;color:#2a2a2a;letter-spacing:-0.2px">431.8 x 558.8 mm</div>
<div class="a" style="left:168px;top:659px;width:16px;height:16px;background:#ececec;"></div>
<svg style="left:172px;top:663px" width="7" height="9"><path d="M6 1L2 4.5 6 8" fill="none" stroke="#333" stroke-width="1.5"/></svg>
<div class="a" style="left:184px;top:659px;width:448px;height:16px;background:#ececec;"></div>
<div class="a" style="left:185px;top:660px;width:135px;height:14px;background:#c9c9c9;"></div>
<svg style="left:605px;top:663px" width="7" height="9"><path d="M1 1l4 3.5L1 8" fill="none" stroke="#333" stroke-width="1.5"/></svg>
<div class="a" style="left:8px;top:659px;width:38px;height:16px;background:#666666;"></div>
<div class="a" style="left:0px;top:682px;width:640px;height:15px;background:#f2f2f2;"></div>
<div class="a" style="left:2px;top:683px;width:13px;height:13px;background:#fafafa;border-right:1px solid #c4c4c4"></div>
<div class="a" style="left:16px;top:683px;width:13px;height:13px;background:#fafafa;border-right:1px solid #c4c4c4"></div>
<div class="a" style="left:30px;top:683px;width:13px;height:13px;background:#fafafa;border-right:1px solid #c4c4c4"></div>
<div class="a" style="left:44px;top:683px;width:13px;height:13px;background:#fafafa;border-right:1px solid #c4c4c4"></div>
<svg style="left:2px;top:684px" width="56" height="12" viewBox="0 0 56 12"><path d="M4.5 2v8" stroke="#555" stroke-width="1"/><path d="M10 2v8L5.5 6z" fill="#555"/><path d="M24 2v8L19.5 6z" fill="#555"/><path d="M33 2v8L37.5 6z" fill="#555"/><path d="M46 2v8L50.5 6z" fill="#555"/><path d="M52.5 2v8" stroke="#555" stroke-width="1"/></svg>
<svg style="left:0px;top:682px" width="240" height="15" viewBox="0 0 240 15"><path d="M58.5 0L63.5 14H102.5L107 0z" fill="#ffffff"/><path d="M58.5 0L63.5 14M107 0L102.5 14M158.6 0L154.7 14M211.2 0L204.2 14" fill="none" stroke="#3a3a3a" stroke-width="0.9"/><path d="M63.5 14.2H102.5" stroke="#fff" stroke-width="1"/></svg>
<div class="t" style="left:70px;top:685px;font-size:11px;color:#333;letter-spacing:-0.4px">Model</div>
<div class="t" style="left:112px;top:685px;font-size:11px;color:#333;letter-spacing:-0.4px">Layout1</div>
<div class="t" style="left:164px;top:685px;font-size:11px;color:#333;letter-spacing:-0.4px">Layout2</div>
<div class="a" style="left:0px;top:696px;width:640px;height:2px;background:#ffffff;"></div>
<div class="a" style="left:0;top:698px;width:640px;height:20px;background:linear-gradient(#8c8c8c,#7e7e7e 50%,#6e6e6e);border-top:1px solid #4a4a4a"></div>
<div class="t" style="left:12px;top:704px;font-size:11.5px;color:#111;-webkit-text-stroke:0.25px #111;transform:scaleX(0.86);transform-origin:0 0">261.3767, 170.5486, 0.0000</div>
<div class="a" style="left:184px;top:699px;width:21px;height:19px;background:linear-gradient(#cdcdcd,#b9b9b9);border-left:1px solid #4e4e4e"></div><div class="a" style="left:205px;top:699px;width:20.5px;height:19px;background:linear-gradient(#cdcdcd,#b9b9b9);border-left:1px solid #4e4e4e"></div><div class="a" style="left:225.5px;top:699px;width:20.5px;height:19px;background:linear-gradient(#cdcdcd,#b9b9b9);border-left:1px solid #4e4e4e"></div><div class="a" style="left:246px;top:699px;width:21px;height:19px;background:linear-gradient(#cfe7f3,#a8d2e4);border-left:1px solid #4e4e4e"></div><div class="a" style="left:267px;top:699px;width:20.5px;height:19px;background:linear-gradient(#cdcdcd,#b9b9b9);border-left:1px solid #4e4e4e"></div><div class="a" style="left:287.5px;top:699px;width:20.5px;height:19px;background:linear-gradient(#cfe7f3,#a8d2e4);border-left:1px solid #4e4e4e"></div><div class="a" style="left:308px;top:699px;width:21px;height:19px;background:linear-gradient(#cfe7f3,#a8d2e4);border-left:1px solid #4e4e4e"></div><div class="a" style="left:329px;top:699px;width:20px;height:19px;background:linear-gradient(#cdcdcd,#b9b9b9);border-left:1px solid #4e4e4e"></div><div class="a" style="left:349px;top:699px;width:21px;height:19px;background:linear-gradient(#cdcdcd,#b9b9b9);border-left:1px solid #4e4e4e"></div><div class="a" style="left:370px;top:699px;width:20px;height:19px;background:linear-gradient(#cdcdcd,#b9b9b9);border-left:1px solid #4e4e4e"></div><div class="a" style="left:390px;top:699px;width:21px;height:19px;background:linear-gradient(#cfe7f3,#a8d2e4);border-left:1px solid #4e4e4e"></div><div class="a" style="left:411px;top:699px;width:21px;height:19px;background:linear-gradient(#cfe7f3,#a8d2e4);border-left:1px solid #4e4e4e"></div><div class="a" style="left:432px;top:699px;width:20px;height:19px;background:linear-gradient(#cdcdcd,#b9b9b9);border-left:1px solid #4e4e4e"></div><div class="a" style="left:452px;top:699px;width:21px;height:19px;background:linear-gradient(#cdcdcd,#b9b9b9);border-left:1px solid #4e4e4e"></div><div class="a" style="left:473px;top:699px;width:20.5px;height:19px;background:linear-gradient(#cdcdcd,#b9b9b9);border-left:1px solid #4e4e4e"></div><div class="a" style="left:493.5px;top:699px;width:1px;height:19px;background:#4e4e4e"></div><svg style="left:0;top:0" width="1280" height="720"><path d="M192.5 701v14M187 708h11" stroke="#222" stroke-width="1.4"/><rect x="190" y="706" width="5" height="5" fill="none" stroke="#444" stroke-width="0.8"/><rect x="197" y="709" width="3.5" height="3.5" fill="#e8e8f8" stroke="#6a7ab0" stroke-width="0.8"/><rect x="194" y="713" width="3.5" height="3.5" fill="#f8f0e0" stroke="#c09070" stroke-width="0.8"/><rect x="209" y="704" width="1.3" height="1.3" fill="#555"/><rect x="209" y="707" width="1.3" height="1.3" fill="#555"/><rect x="209" y="710" width="1.3" height="1.3" fill="#555"/><rect x="212" y="704" width="1.3" height="1.3" fill="#555"/><rect x="212" y="707" width="1.3" height="1.3" fill="#555"/><rect x="212" y="710" width="1.3" height="1.3" fill="#555"/><rect x="215" y="704" width="1.3" height="1.3" fill="#555"/><rect x="215" y="707" width="1.3" height="1.3" fill="#555"/><rect x="215" y="710" width="1.3" height="1.3" fill="#555"/><rect x="218" y="704" width="1.3" height="1.3" fill="#555"/><rect x="218" y="707" width="1.3" height="1.3" fill="#555"/><rect x="218" y="710" width="1.3" height="1.3" fill="#555"/><path d="M219.5 704v10M211 713.5h9" stroke="#222" stroke-width="1.3"/><rect x="228.5" y="701.5" width="15" height="14" fill="#f4f4f4" stroke="#222" stroke-width="1"/><path d="M231.5 701.5v14" stroke="#333" stroke-width="0.9"/><path d="M234.5 701.5v14" stroke="#333" stroke-width="0.9"/><path d="M237.5 701.5v14" stroke="#333" stroke-width="0.9"/><path d="M240.5 701.5v14" stroke="#333" stroke-width="0.9"/><path d="M228.5 704.3h15" stroke="#333" stroke-width="0.9"/><path d="M228.5 707.1h15" stroke="#333" stroke-width="0.9"/><path d="M228.5 709.9h15" stroke="#333" stroke-width="0.9"/><path d="M228.5 712.7h15" stroke="#333" stroke-width="0.9"/><path d="M249 701v14h15M249 709h5v6" fill="none" stroke="#1e4a68" stroke-width="1.2"/><circle cx="275" cy="711" r="4" fill="none" stroke="#333" stroke-width="1.2"/><path d="M274 711l8-6M276 705l5 5" stroke="#222" stroke-width="1.3"/><rect x="291" y="702" width="13" height="12" fill="#eef2f6" stroke="#22384a" stroke-width="1.2"/><rect x="289" y="700" width="3.5" height="3.5" fill="#f8e8c0" stroke="#c8a050" stroke-width="0.7"/><path d="M313 703h12v10l-3 2h-9z" fill="#eef2f6" stroke="#22384a" stroke-width="1.1"/><path d="M313 703q0-2 3-2h9" fill="none" stroke="#22384a" stroke-width="1.1"/><circle cx="312" cy="715" r="1.8" fill="#f8e0b0" stroke="#c8a050" stroke-width="0.7"/><path d="M343 702l-10 12h11" fill="none" stroke="#222" stroke-width="1.3"/><path d="M352 701v14h14M352 715l7-7" fill="none" stroke="#333" stroke-width="1"/><path d="M362 702l1.5 3 3 .5-2 2.2.5 3-3-1.5-3 1.5.5-3-2-2.2 3-.5z" fill="#f4b840"/><path d="M376 704v8M372 708h8" stroke="#222" stroke-width="1.3"/><path d="M379 709h5v4h-5z" fill="none" stroke="#222" stroke-width="1"/><path d="M400 701v15M393 708.5h14" stroke="#111" stroke-width="2"/><defs><pattern id="chk" width="2" height="2" patternUnits="userSpaceOnUse"><rect width="2" height="2" fill="#d4e8fa"/><rect width="1" height="1" fill="#8ab8e8"/><rect x="1" y="1" width="1" height="1" fill="#8ab8e8"/></pattern></defs><rect x="413.5" y="701" width="15" height="14" fill="url(#chk)" stroke="#2a4a8a" stroke-width="1.4"/><rect x="437.5" y="702.5" width="9" height="11" fill="#f4f4f4" stroke="#222" stroke-width="1.4"/><path d="M443 705v6" stroke="#666" stroke-width="0.8"/><path d="M456 700.5v6M453 703.5h6" stroke="#333" stroke-width="1"/><rect x="458" y="705" width="8" height="8" fill="#8cc870" stroke="#3a7a2a" stroke-width="0.9"/><rect x="461" y="708" width="8" height="8" fill="#6ab850" stroke="#2a6a1a" stroke-width="0.9"/><path d="M480.5 701.5h5v4.5h4.5v5h-4.5v4.5h-5v-4.5h-4.5v-5h4.5z" fill="#fafafa" stroke="#555" stroke-width="0.9"/></svg>
<div class="a" style="left:0px;top:718px;width:640px;height:2px;background:#8a5e50;"></div>
<div class="a" style="left:51px;top:718px;width:54px;height:2px;background:#e8dcd8;"></div>
<div class="a" style="left:166px;top:718px;width:55px;height:2px;background:#e0d4d0;"></div>
<div class="a" style="left:514px;top:718px;width:52px;height:2px;background:#f0ecea;"></div>
<div class="a" style="left:640px;top:0px;width:640px;height:718px;background:#ebebeb;"></div>
<div class="a" style="left:640px;top:0px;width:2px;height:718px;background:#f2c8b0;"></div>
<div class="a" style="left:642px;top:0px;width:638px;height:1px;background:#d6d6d6;"></div>
<svg style="left:648px;top:6px" width="18" height="18" viewBox="0 0 18 18"><path d="M4.3 2h11.7v13.3h-11.7z" fill="#fbf5f2" stroke="#c8b0a8" stroke-width="0.6"/><rect x="1.3" y="2.3" width="9" height="3.7" fill="#c22a2e"/><path d="M10.2 4.5c.8 3-1 6.5-3.6 9.3 M7.8 11.2c2.6-1 5.5-1.2 8.2-.3" fill="none" stroke="#8e1a22" stroke-width="1.3"/></svg>
<div class="t" style="left:822px;top:8px;font-size:14.1px;color:#3c3c3c;transform:scaleX(0.967);transform-origin:0 0">EDIFICIO MULTIFAMILIA.pdf - Adobe Reader</div>
<div class="a" style="left:1231px;top:0px;width:42px;height:20px;background:#c7c7c7;"></div>
<svg style="left:1247px;top:5px" width="10" height="10" viewBox="0 0 10 10"><path d="M1 1L9 9M9 1L1 9" stroke="#fff" stroke-width="1.6"/></svg>
<div class="a" style="left:1190px;top:12px;width:8px;height:2px;background:#222;"></div>
<div class="a" style="left:1215px;top:6px;width:9px;height:8px;border:1px solid #222;border-top-width:2px"></div>
<div class="a" style="left:648px;top:48px;width:624px;height:35px;background:linear-gradient(#f5f5f5,#ececec 45%,#dcdcdc);border-top:1px solid #404040;border-bottom:1px solid #5a5a5a"></div>
<div class="a" style="left:648px;top:29px;width:624px;height:19px;background:#dedede;"></div>
<div class="t" style="left:654px;top:34px;font-size:11.3px;color:#1c1c1c;-webkit-text-stroke:0.1px #1c1c1c">Archivo</div>
<div class="t" style="left:705px;top:34px;font-size:11.3px;color:#1c1c1c;-webkit-text-stroke:0.1px #1c1c1c">Edición</div>
<div class="t" style="left:755px;top:34px;font-size:11.3px;color:#1c1c1c;-webkit-text-stroke:0.1px #1c1c1c">Ver</div>
<div class="t" style="left:784px;top:34px;font-size:11.3px;color:#1c1c1c;-webkit-text-stroke:0.1px #1c1c1c">Ventana</div>
<div class="t" style="left:838px;top:34px;font-size:11.3px;color:#1c1c1c;-webkit-text-stroke:0.1px #1c1c1c">Ayuda</div>
<svg style="left:1259px;top:35px" width="8" height="8" viewBox="0 0 8 8"><path d="M1 1L7 7M7 1L1 7" stroke="#111" stroke-width="1.8"/></svg>
<svg style="left:656px;top:54px" width="26" height="24" viewBox="0 0 26 24"><path d="M6.5 1.5h10l5 5v12h-15z" fill="#eef4fa" stroke="#7a7a7a" stroke-width="1"/><path d="M16.5 1.5v5h5" fill="none" stroke="#8a8a8a" stroke-width="0.8"/><path d="M9 9.5h9M9 12.5h9M9 15.5h8" stroke="#4a88c8" stroke-width="1"/><path d="M1.5 13.5c-.5 5 3.5 8.5 9 8l-.5 2.3 5-3.8-4.5-3.8v2.2c-3.5 .5-6-1.5-6-4.9z" fill="#eac248" stroke="#b8901e" stroke-width="0.8"/></svg>
<svg style="left:687px;top:54px" width="26" height="24" viewBox="0 0 26 24"><path d="M5.5 1.5h10l5 5v12h-15z" fill="#f4f4f4" stroke="#7a7a7a" stroke-width="1"/><path d="M15.5 1.5v5h5" fill="none" stroke="#8a8a8a" stroke-width="0.8"/><rect x="2" y="4" width="10" height="5" fill="#d8343a"/><circle cx="18" cy="18.5" r="4.2" fill="#e8c040" stroke="#c89820" stroke-width="1.6" stroke-dasharray="1.6 1.1"/></svg>
<svg style="left:718px;top:54px" width="26" height="24" viewBox="0 0 26 24"><path d="M3.5 2.5h10l4 4v13h-14z" fill="#f4f4f4" stroke="#6a6a6a" stroke-width="1"/><path d="M6 8h6M6 11h8M6 14h6M6 17h5" stroke="#9a9a9a" stroke-width="0.8"/><path d="M11 18l9-9 2.5 2.5-9 9-3 .5z" fill="#dfe6ee" stroke="#6a6a6a" stroke-width="1"/></svg>
<div class="a" style="left:752px;top:53px;width:1px;height:25px;background:#9a9a9a;box-shadow:1px 0 0 #fafafa"></div>
<div class="a" style="left:817px;top:53px;width:1px;height:25px;background:#9a9a9a;box-shadow:1px 0 0 #fafafa"></div>
<div class="a" style="left:903px;top:53px;width:1px;height:25px;background:#9a9a9a;box-shadow:1px 0 0 #fafafa"></div>
<div class="a" style="left:762px;top:54px;width:24px;height:24px;background:#fff;border:1px solid #9c9c9c"></div>
<div class="t" style="left:770px;top:60px;font-size:12px;color:#222">1</div>
<div class="t" style="left:792px;top:60px;font-size:12px;color:#444">/&nbsp;&nbsp;1</div>
<div class="a" style="left:827px;top:54px;width:67px;height:24px;background:#fff;border:1px solid #9c9c9c"></div>
<div class="a" style="left:872px;top:55px;width:21px;height:22px;background:linear-gradient(#f4f4f4,#dcdcdc);border-left:1px solid #b0b0b0"></div>
<svg style="left:878px;top:63px" width="9" height="6"><path d="M0 0h9L4.5 5z" fill="#333"/></svg>
<div class="t" style="left:835px;top:60px;font-size:11.6px;color:#222;letter-spacing:-0.4px">51.5%</div>
<div class="a" style="left:915px;top:54px;width:22px;height:23px;background:linear-gradient(#fbfbfb,#e4e4e4);border:1px solid #a8a8a8"></div>
<svg style="left:917px;top:56px" width="18" height="19" viewBox="0 0 18 19"><path d="M10 2h6v6l-2-2-3 3-2-2 3-3z M8 17H2v-6l2 2 3-3 2 2-3 3z" fill="#5a5a5a"/></svg>
<svg style="left:949px;top:61px" width="10" height="9"><path d="M1 1h8" stroke="#555" stroke-width="1.2"/><path d="M1 3.5h8L5 8z" fill="#555"/></svg>
<div class="t" style="left:996px;top:58px;font-size:14px;font-weight:bold;color:#4b6286">Herramientas</div>
<div class="t" style="left:1112px;top:58px;font-size:14px;font-weight:bold;color:#4b6286">Firmar</div>
<div class="t" style="left:1182px;top:58px;font-size:14px;font-weight:bold;color:#4b6286;letter-spacing:-0.1px">Comentario</div>
<div class="a" style="left:1099px;top:52px;width:1px;height:27px;border-left:1px dotted #8a8a8a"></div>
<div class="a" style="left:1168px;top:52px;width:1px;height:27px;border-left:1px dotted #8a8a8a"></div>
<div class="a" style="left:648px;top:83px;width:38px;height:628px;background:#666666;"></div>
<svg style="left:654px;top:90px" width="24" height="24" viewBox="0 0 24 24"><path d="M2.5 6.5h10l2 2v12h-12z" fill="#b8b8b8" stroke="#8a8a8a" stroke-width="0.8"/><path d="M7.5 2.5h10l3 3v12h-13z" fill="#d0d0d0" stroke="#8a8a8a" stroke-width="0.8"/></svg>
<svg style="left:654px;top:127px" width="24" height="28" viewBox="0 0 24 28"><path d="M17 4L5 17c-2 2-1 5 1 6s4 0 5-1l10-11c1.5-1.5 1-3.5-.5-4.5s-3-.5-4 .5L8 17c-.8.8-.5 2 .3 2.3s1.5 0 2-.6l7-7.5" fill="none" stroke="#a6a6a6" stroke-width="1.3"/></svg>
<svg style="left:654px;top:172px" width="24" height="24" viewBox="0 0 24 24"><path d="M12 11l9 5-9 5-9-5z" fill="#8e9cb0" stroke="#a8b4c4" stroke-width="0.6"/><path d="M12 3l9 5-9 5-9-5z" fill="#b4b8c0" stroke="#ccd0d6" stroke-width="0.6"/></svg>
<div class="a" style="left:686px;top:83px;width:1px;height:628px;background:#111;"></div>
<div class="a" style="left:687px;top:83px;width:569px;height:628px;background:#555555;"></div>
<div class="a" style="left:687px;top:83px;width:569px;height:3px;background:#474747;"></div>
<div class="a" style="left:752px;top:87px;width:439px;height:621px;background:#ffffff;"></div>
<svg style="left:0;top:0" width="1280" height="720" viewBox="0 0 1280 720"><defs><clipPath id="cr"><rect x="752" y="87" width="439" height="621"/></clipPath></defs><g clip-path="url(#cr)"><line x1="844.5" y1="102.5" x2="844.5" y2="651.7" stroke="#141414" stroke-width="1.1"/><line x1="1087.5" y1="102.5" x2="1087.5" y2="651.7" stroke="#141414" stroke-width="1.1"/><line x1="857.5" y1="95" x2="857.5" y2="376.4" stroke="#505050" stroke-width="1.3"/><line x1="857.5" y1="384.5" x2="857.5" y2="678.0" stroke="#505050" stroke-width="1.3"/><line x1="1071.5" y1="95" x2="1071.5" y2="376.4" stroke="#303030" stroke-width="1.3"/><line x1="1071.5" y1="384.5" x2="1071.5" y2="678.0" stroke="#303030" stroke-width="1.3"/><line x1="841.5" y1="102.5" x2="847.9000000000001" y2="102.5" stroke="#141414" stroke-width="1.4"/><path d="M843.7 100.7L845.7 104.3" stroke="#141414" stroke-width="0.8"/><line x1="1084.0" y1="102.5" x2="1090.4" y2="102.5" stroke="#141414" stroke-width="1.4"/><path d="M1086.2 100.7L1088.2 104.3" stroke="#141414" stroke-width="0.8"/><line x1="853.5" y1="98.5" x2="860.5" y2="98.5" stroke="#141414" stroke-width="1.4"/><path d="M856.0 96.4L858.0 100.0" stroke="#141414" stroke-width="0.8"/><line x1="853.5" y1="106.5" x2="860.5" y2="106.5" stroke="#141414" stroke-width="1.4"/><path d="M856.0 105.0L858.0 108.6" stroke="#141414" stroke-width="0.8"/><line x1="1067.8" y1="98.5" x2="1074.8" y2="98.5" stroke="#141414" stroke-width="1.4"/><path d="M1070.3 96.4L1072.3 100.0" stroke="#141414" stroke-width="0.8"/><line x1="1067.8" y1="106.5" x2="1074.8" y2="106.5" stroke="#141414" stroke-width="1.4"/><path d="M1070.3 105.0L1072.3 108.6" stroke="#141414" stroke-width="0.8"/><text x="851.2" y="104.0" font-size="4.0" fill="#555" text-anchor="middle" font-family="Liberation Sans" stroke="#666" stroke-width="0.2">0.00</text><text x="1079" y="104.0" font-size="4.0" fill="#555" text-anchor="middle" font-family="Liberation Sans" stroke="#666" stroke-width="0.2">0.00</text><circle cx="1094.4" cy="102.5" r="5.4" fill="#fff" stroke="#888" stroke-width="0.9"/><text x="1094.4" y="105.6" font-size="8.8" fill="#3a3a3a" text-anchor="middle" font-family="Liberation Sans" stroke="#3a3a3a" stroke-width="0.1">7</text><circle cx="1185.6" cy="102.5" r="5.4" fill="#fff" stroke="#888" stroke-width="0.9"/><text x="1185.6" y="105.6" font-size="8.8" fill="#3a3a3a" text-anchor="middle" font-family="Liberation Sans" stroke="#3a3a3a" stroke-width="0.1">7</text><circle cx="837.2" cy="102.5" r="5.4" fill="#fff" stroke="#888" stroke-width="0.9"/><text x="837.2" y="105.6" font-size="8.8" fill="#3a3a3a" text-anchor="middle" font-family="Liberation Sans" stroke="#3a3a3a" stroke-width="0.1">7</text><line x1="841.5" y1="196.5" x2="847.9000000000001" y2="196.5" stroke="#141414" stroke-width="1.4"/><path d="M843.7 194.2L845.7 197.8" stroke="#141414" stroke-width="0.8"/><line x1="1084.0" y1="196.5" x2="1090.4" y2="196.5" stroke="#141414" stroke-width="1.4"/><path d="M1086.2 194.2L1088.2 197.8" stroke="#141414" stroke-width="0.8"/><line x1="853.5" y1="191.5" x2="860.5" y2="191.5" stroke="#141414" stroke-width="1.4"/><path d="M856.0 189.89999999999998L858.0 193.5" stroke="#141414" stroke-width="0.8"/><line x1="853.5" y1="200.5" x2="860.5" y2="200.5" stroke="#141414" stroke-width="1.4"/><path d="M856.0 198.5L858.0 202.10000000000002" stroke="#141414" stroke-width="0.8"/><line x1="1067.8" y1="191.5" x2="1074.8" y2="191.5" stroke="#141414" stroke-width="1.4"/><path d="M1070.3 189.89999999999998L1072.3 193.5" stroke="#141414" stroke-width="0.8"/><line x1="1067.8" y1="200.5" x2="1074.8" y2="200.5" stroke="#141414" stroke-width="1.4"/><path d="M1070.3 198.5L1072.3 202.10000000000002" stroke="#141414" stroke-width="0.8"/><text x="851.2" y="197.5" font-size="4.0" fill="#555" text-anchor="middle" font-family="Liberation Sans" stroke="#666" stroke-width="0.2">0.00</text><text x="1079" y="197.5" font-size="4.0" fill="#555" text-anchor="middle" font-family="Liberation Sans" stroke="#666" stroke-width="0.2">0.00</text><circle cx="1094.4" cy="196.0" r="5.4" fill="#fff" stroke="#888" stroke-width="0.9"/><text x="1094.4" y="199.1" font-size="8.8" fill="#3a3a3a" text-anchor="middle" font-family="Liberation Sans" stroke="#3a3a3a" stroke-width="0.1">6</text><circle cx="1185.6" cy="196.0" r="5.4" fill="#fff" stroke="#888" stroke-width="0.9"/><text x="1185.6" y="199.1" font-size="8.8" fill="#3a3a3a" text-anchor="middle" font-family="Liberation Sans" stroke="#3a3a3a" stroke-width="0.1">6</text><circle cx="837.2" cy="196.0" r="5.4" fill="#fff" stroke="#888" stroke-width="0.9"/><text x="837.2" y="199.1" font-size="8.8" fill="#3a3a3a" text-anchor="middle" font-family="Liberation Sans" stroke="#3a3a3a" stroke-width="0.1">6</text><line x1="841.5" y1="296.5" x2="847.9000000000001" y2="296.5" stroke="#141414" stroke-width="1.4"/><path d="M843.7 294.8L845.7 298.40000000000003" stroke="#141414" stroke-width="0.8"/><line x1="1084.0" y1="296.5" x2="1090.4" y2="296.5" stroke="#141414" stroke-width="1.4"/><path d="M1086.2 294.8L1088.2 298.40000000000003" stroke="#141414" stroke-width="0.8"/><line x1="853.5" y1="292.5" x2="860.5" y2="292.5" stroke="#141414" stroke-width="1.4"/><path d="M856.0 290.5L858.0 294.1" stroke="#141414" stroke-width="0.8"/><line x1="853.5" y1="300.5" x2="860.5" y2="300.5" stroke="#141414" stroke-width="1.4"/><path d="M856.0 299.1L858.0 302.70000000000005" stroke="#141414" stroke-width="0.8"/><line x1="1067.8" y1="292.5" x2="1074.8" y2="292.5" stroke="#141414" stroke-width="1.4"/><path d="M1070.3 290.5L1072.3 294.1" stroke="#141414" stroke-width="0.8"/><line x1="1067.8" y1="300.5" x2="1074.8" y2="300.5" stroke="#141414" stroke-width="1.4"/><path d="M1070.3 299.1L1072.3 302.70000000000005" stroke="#141414" stroke-width="0.8"/><text x="851.2" y="298.1" font-size="4.0" fill="#555" text-anchor="middle" font-family="Liberation Sans" stroke="#666" stroke-width="0.2">0.00</text><text x="1079" y="298.1" font-size="4.0" fill="#555" text-anchor="middle" font-family="Liberation Sans" stroke="#666" stroke-width="0.2">0.00</text><circle cx="1094.4" cy="296.6" r="5.4" fill="#fff" stroke="#888" stroke-width="0.9"/><text x="1094.4" y="299.70000000000005" font-size="8.8" fill="#3a3a3a" text-anchor="middle" font-family="Liberation Sans" stroke="#3a3a3a" stroke-width="0.1">5</text><circle cx="1185.6" cy="296.6" r="5.4" fill="#fff" stroke="#888" stroke-width="0.9"/><text x="1185.6" y="299.70000000000005" font-size="8.8" fill="#3a3a3a" text-anchor="middle" font-family="Liberation Sans" stroke="#3a3a3a" stroke-width="0.1">5</text><circle cx="837.2" cy="296.6" r="5.4" fill="#fff" stroke="#888" stroke-width="0.9"/><text x="837.2" y="299.70000000000005" font-size="8.8" fill="#3a3a3a" text-anchor="middle" font-family="Liberation Sans" stroke="#3a3a3a" stroke-width="0.1">5</text><line x1="841.5" y1="380.5" x2="847.9000000000001" y2="380.5" stroke="#141414" stroke-width="1.4"/><path d="M843.7 378.3L845.7 381.90000000000003" stroke="#141414" stroke-width="0.8"/><line x1="1084.0" y1="380.5" x2="1090.4" y2="380.5" stroke="#141414" stroke-width="1.4"/><path d="M1086.2 378.3L1088.2 381.90000000000003" stroke="#141414" stroke-width="0.8"/><line x1="853.5" y1="375.5" x2="860.5" y2="375.5" stroke="#141414" stroke-width="1.4"/><path d="M856.0 374.0L858.0 377.6" stroke="#141414" stroke-width="0.8"/><line x1="853.5" y1="384.5" x2="860.5" y2="384.5" stroke="#141414" stroke-width="1.4"/><path d="M856.0 382.6L858.0 386.20000000000005" stroke="#141414" stroke-width="0.8"/><line x1="1067.8" y1="375.5" x2="1074.8" y2="375.5" stroke="#141414" stroke-width="1.4"/><path d="M1070.3 374.0L1072.3 377.6" stroke="#141414" stroke-width="0.8"/><line x1="1067.8" y1="384.5" x2="1074.8" y2="384.5" stroke="#141414" stroke-width="1.4"/><path d="M1070.3 382.6L1072.3 386.20000000000005" stroke="#141414" stroke-width="0.8"/><text x="851.2" y="381.6" font-size="4.0" fill="#555" text-anchor="middle" font-family="Liberation Sans" stroke="#666" stroke-width="0.2">0.00</text><text x="1079" y="381.6" font-size="4.0" fill="#555" text-anchor="middle" font-family="Liberation Sans" stroke="#666" stroke-width="0.2">0.00</text><circle cx="1094.4" cy="380.1" r="5.4" fill="#fff" stroke="#888" stroke-width="0.9"/><text x="1094.4" y="383.20000000000005" font-size="8.8" fill="#3a3a3a" text-anchor="middle" font-family="Liberation Sans" stroke="#3a3a3a" stroke-width="0.1">4</text><circle cx="1185.6" cy="380.1" r="5.4" fill="#fff" stroke="#888" stroke-width="0.9"/><text x="1185.6" y="383.20000000000005" font-size="8.8" fill="#3a3a3a" text-anchor="middle" font-family="Liberation Sans" stroke="#3a3a3a" stroke-width="0.1">4</text><line x1="841.5" y1="445.5" x2="847.9000000000001" y2="445.5" stroke="#141414" stroke-width="1.4"/><path d="M843.7 443.5L845.7 447.1" stroke="#141414" stroke-width="0.8"/><line x1="1084.0" y1="445.5" x2="1090.4" y2="445.5" stroke="#141414" stroke-width="1.4"/><path d="M1086.2 443.5L1088.2 447.1" stroke="#141414" stroke-width="0.8"/><line x1="853.5" y1="441.5" x2="860.5" y2="441.5" stroke="#141414" stroke-width="1.4"/><path d="M856.0 439.2L858.0 442.8" stroke="#141414" stroke-width="0.8"/><line x1="853.5" y1="449.5" x2="860.5" y2="449.5" stroke="#141414" stroke-width="1.4"/><path d="M856.0 447.8L858.0 451.40000000000003" stroke="#141414" stroke-width="0.8"/><line x1="1067.8" y1="441.5" x2="1074.8" y2="441.5" stroke="#141414" stroke-width="1.4"/><path d="M1070.3 439.2L1072.3 442.8" stroke="#141414" stroke-width="0.8"/><line x1="1067.8" y1="449.5" x2="1074.8" y2="449.5" stroke="#141414" stroke-width="1.4"/><path d="M1070.3 447.8L1072.3 451.40000000000003" stroke="#141414" stroke-width="0.8"/><text x="851.2" y="446.8" font-size="4.0" fill="#555" text-anchor="middle" font-family="Liberation Sans" stroke="#666" stroke-width="0.2">0.00</text><text x="1079" y="446.8" font-size="4.0" fill="#555" text-anchor="middle" font-family="Liberation Sans" stroke="#666" stroke-width="0.2">0.00</text><circle cx="1094.4" cy="445.3" r="5.4" fill="#fff" stroke="#888" stroke-width="0.9"/><text x="1094.4" y="448.40000000000003" font-size="8.8" fill="#3a3a3a" text-anchor="middle" font-family="Liberation Sans" stroke="#3a3a3a" stroke-width="0.1">3</text><circle cx="1185.6" cy="445.3" r="5.4" fill="#fff" stroke="#888" stroke-width="0.9"/><text x="1185.6" y="448.40000000000003" font-size="8.8" fill="#3a3a3a" text-anchor="middle" font-family="Liberation Sans" stroke="#3a3a3a" stroke-width="0.1">3</text><circle cx="837.2" cy="445.3" r="5.4" fill="#fff" stroke="#888" stroke-width="0.9"/><text x="837.2" y="448.40000000000003" font-size="8.8" fill="#3a3a3a" text-anchor="middle" font-family="Liberation Sans" stroke="#3a3a3a" stroke-width="0.1">3</text><line x1="841.5" y1="537.5" x2="847.9000000000001" y2="537.5" stroke="#141414" stroke-width="1.4"/><path d="M843.7 535.7L845.7 539.3" stroke="#141414" stroke-width="0.8"/><line x1="1084.0" y1="537.5" x2="1090.4" y2="537.5" stroke="#141414" stroke-width="1.4"/><path d="M1086.2 535.7L1088.2 539.3" stroke="#141414" stroke-width="0.8"/><line x1="853.5" y1="533.5" x2="860.5" y2="533.5" stroke="#141414" stroke-width="1.4"/><path d="M856.0 531.4000000000001L858.0 535.0" stroke="#141414" stroke-width="0.8"/><line x1="853.5" y1="541.5" x2="860.5" y2="541.5" stroke="#141414" stroke-width="1.4"/><path d="M856.0 540.0L858.0 543.5999999999999" stroke="#141414" stroke-width="0.8"/><line x1="1067.8" y1="533.5" x2="1074.8" y2="533.5" stroke="#141414" stroke-width="1.4"/><path d="M1070.3 531.4000000000001L1072.3 535.0" stroke="#141414" stroke-width="0.8"/><line x1="1067.8" y1="541.5" x2="1074.8" y2="541.5" stroke="#141414" stroke-width="1.4"/><path d="M1070.3 540.0L1072.3 543.5999999999999" stroke="#141414" stroke-width="0.8"/><text x="851.2" y="539.0" font-size="4.0" fill="#555" text-anchor="middle" font-family="Liberation Sans" stroke="#666" stroke-width="0.2">0.00</text><text x="1079" y="539.0" font-size="4.0" fill="#555" text-anchor="middle" font-family="Liberation Sans" stroke="#666" stroke-width="0.2">0.00</text><circle cx="1094.4" cy="537.5" r="5.4" fill="#fff" stroke="#888" stroke-width="0.9"/><text x="1094.4" y="540.6" font-size="8.8" fill="#3a3a3a" text-anchor="middle" font-family="Liberation Sans" stroke="#3a3a3a" stroke-width="0.1">2</text><circle cx="1185.6" cy="537.5" r="5.4" fill="#fff" stroke="#888" stroke-width="0.9"/><text x="1185.6" y="540.6" font-size="8.8" fill="#3a3a3a" text-anchor="middle" font-family="Liberation Sans" stroke="#3a3a3a" stroke-width="0.1">2</text><circle cx="837.2" cy="537.5" r="5.4" fill="#fff" stroke="#888" stroke-width="0.9"/><text x="837.2" y="540.6" font-size="8.8" fill="#3a3a3a" text-anchor="middle" font-family="Liberation Sans" stroke="#3a3a3a" stroke-width="0.1">2</text><line x1="841.5" y1="651.5" x2="847.9000000000001" y2="651.5" stroke="#141414" stroke-width="1.4"/><path d="M843.7 649.9000000000001L845.7 653.5" stroke="#141414" stroke-width="0.8"/><line x1="1084.0" y1="651.5" x2="1090.4" y2="651.5" stroke="#141414" stroke-width="1.4"/><path d="M1086.2 649.9000000000001L1088.2 653.5" stroke="#141414" stroke-width="0.8"/><line x1="853.5" y1="647.5" x2="860.5" y2="647.5" stroke="#141414" stroke-width="1.4"/><path d="M856.0 645.6000000000001L858.0 649.2" stroke="#141414" stroke-width="0.8"/><line x1="853.5" y1="656.5" x2="860.5" y2="656.5" stroke="#141414" stroke-width="1.4"/><path d="M856.0 654.2L858.0 657.8" stroke="#141414" stroke-width="0.8"/><line x1="1067.8" y1="647.5" x2="1074.8" y2="647.5" stroke="#141414" stroke-width="1.4"/><path d="M1070.3 645.6000000000001L1072.3 649.2" stroke="#141414" stroke-width="0.8"/><line x1="1067.8" y1="656.5" x2="1074.8" y2="656.5" stroke="#141414" stroke-width="1.4"/><path d="M1070.3 654.2L1072.3 657.8" stroke="#141414" stroke-width="0.8"/><text x="851.2" y="653.2" font-size="4.0" fill="#555" text-anchor="middle" font-family="Liberation Sans" stroke="#666" stroke-width="0.2">0.00</text><text x="1079" y="653.2" font-size="4.0" fill="#555" text-anchor="middle" font-family="Liberation Sans" stroke="#666" stroke-width="0.2">0.00</text><circle cx="1094.4" cy="651.7" r="5.4" fill="#fff" stroke="#888" stroke-width="0.9"/><text x="1094.4" y="654.8000000000001" font-size="8.8" fill="#3a3a3a" text-anchor="middle" font-family="Liberation Sans" stroke="#3a3a3a" stroke-width="0.1">1</text><circle cx="1185.6" cy="651.7" r="5.4" fill="#fff" stroke="#888" stroke-width="0.9"/><text x="1185.6" y="654.8000000000001" font-size="8.8" fill="#3a3a3a" text-anchor="middle" font-family="Liberation Sans" stroke="#3a3a3a" stroke-width="0.1">1</text><circle cx="837.2" cy="651.7" r="5.4" fill="#fff" stroke="#888" stroke-width="0.9"/><text x="837.2" y="654.8000000000001" font-size="8.8" fill="#3a3a3a" text-anchor="middle" font-family="Liberation Sans" stroke="#3a3a3a" stroke-width="0.1">1</text><line x1="853.5" y1="678.5" x2="860.5" y2="678.5" stroke="#141414" stroke-width="1.4"/><path d="M856.0 676.2L858.0 679.8" stroke="#141414" stroke-width="0.8"/><line x1="1067.8" y1="678.5" x2="1074.8" y2="678.5" stroke="#141414" stroke-width="1.4"/><path d="M1070.3 676.2L1072.3 679.8" stroke="#141414" stroke-width="0.8"/><rect x="854.5" y="665.7" width="5" height="2" fill="#7a7a7a"/><rect x="1068.8" y="665.7" width="5" height="2" fill="#7a7a7a"/><rect x="840.2" y="146.65" width="9" height="5.2" fill="#fff"/><text x="844.7" y="150.75" font-size="4.2" fill="#4a4a4a" text-anchor="middle" font-family="Liberation Sans" stroke="#555" stroke-width="0.25">5.00</text><rect x="852.5" y="146.65" width="9" height="5.2" fill="#fff"/><text x="857.0" y="150.75" font-size="4.2" fill="#4a4a4a" text-anchor="middle" font-family="Liberation Sans" stroke="#555" stroke-width="0.25">5.00</text><rect x="1066.8" y="146.65" width="9" height="5.2" fill="#fff"/><text x="1071.3" y="150.75" font-size="4.2" fill="#4a4a4a" text-anchor="middle" font-family="Liberation Sans" stroke="#555" stroke-width="0.25">5.00</text><rect x="1082.7" y="146.65" width="9" height="5.2" fill="#fff"/><text x="1087.2" y="150.75" font-size="4.2" fill="#4a4a4a" text-anchor="middle" font-family="Liberation Sans" stroke="#555" stroke-width="0.25">5.00</text><rect x="840.2" y="243.70000000000002" width="9" height="5.2" fill="#fff"/><text x="844.7" y="247.8" font-size="4.2" fill="#4a4a4a" text-anchor="middle" font-family="Liberation Sans" stroke="#555" stroke-width="0.25">5.00</text><rect x="852.5" y="243.70000000000002" width="9" height="5.2" fill="#fff"/><text x="857.0" y="247.8" font-size="4.2" fill="#4a4a4a" text-anchor="middle" font-family="Liberation Sans" stroke="#555" stroke-width="0.25">5.00</text><rect x="1066.8" y="243.70000000000002" width="9" height="5.2" fill="#fff"/><text x="1071.3" y="247.8" font-size="4.2" fill="#4a4a4a" text-anchor="middle" font-family="Liberation Sans" stroke="#555" stroke-width="0.25">5.00</text><rect x="1082.7" y="243.70000000000002" width="9" height="5.2" fill="#fff"/><text x="1087.2" y="247.8" font-size="4.2" fill="#4a4a4a" text-anchor="middle" font-family="Liberation Sans" stroke="#555" stroke-width="0.25">5.00</text><rect x="840.2" y="335.75" width="9" height="5.2" fill="#fff"/><text x="844.7" y="339.85" font-size="4.2" fill="#4a4a4a" text-anchor="middle" font-family="Liberation Sans" stroke="#555" stroke-width="0.25">5.00</text><rect x="852.5" y="335.75" width="9" height="5.2" fill="#fff"/><text x="857.0" y="339.85" font-size="4.2" fill="#4a4a4a" text-anchor="middle" font-family="Liberation Sans" stroke="#555" stroke-width="0.25">5.00</text><rect x="1066.8" y="335.75" width="9" height="5.2" fill="#fff"/><text x="1071.3" y="339.85" font-size="4.2" fill="#4a4a4a" text-anchor="middle" font-family="Liberation Sans" stroke="#555" stroke-width="0.25">5.00</text><rect x="1082.7" y="335.75" width="9" height="5.2" fill="#fff"/><text x="1087.2" y="339.85" font-size="4.2" fill="#4a4a4a" text-anchor="middle" font-family="Liberation Sans" stroke="#555" stroke-width="0.25">5.00</text><rect x="840.2" y="410.1" width="9" height="5.2" fill="#fff"/><text x="844.7" y="414.20000000000005" font-size="4.2" fill="#4a4a4a" text-anchor="middle" font-family="Liberation Sans" stroke="#555" stroke-width="0.25">5.00</text><rect x="852.5" y="410.1" width="9" height="5.2" fill="#fff"/><text x="857.0" y="414.20000000000005" font-size="4.2" fill="#4a4a4a" text-anchor="middle" font-family="Liberation Sans" stroke="#555" stroke-width="0.25">5.00</text><rect x="1066.8" y="410.1" width="9" height="5.2" fill="#fff"/><text x="1071.3" y="414.20000000000005" font-size="4.2" fill="#4a4a4a" text-anchor="middle" font-family="Liberation Sans" stroke="#555" stroke-width="0.25">5.00</text><rect x="1082.7" y="410.1" width="9" height="5.2" fill="#fff"/><text x="1087.2" y="414.20000000000005" font-size="4.2" fill="#4a4a4a" text-anchor="middle" font-family="Liberation Sans" stroke="#555" stroke-width="0.25">5.00</text><rect x="840.2" y="488.79999999999995" width="9" height="5.2" fill="#fff"/><text x="844.7" y="492.9" font-size="4.2" fill="#4a4a4a" text-anchor="middle" font-family="Liberation Sans" stroke="#555" stroke-width="0.25">5.00</text><rect x="852.5" y="488.79999999999995" width="9" height="5.2" fill="#fff"/><text x="857.0" y="492.9" font-size="4.2" fill="#4a4a4a" text-anchor="middle" font-family="Liberation Sans" stroke="#555" stroke-width="0.25">5.00</text><rect x="1066.8" y="488.79999999999995" width="9" height="5.2" fill="#fff"/><text x="1071.3" y="492.9" font-size="4.2" fill="#4a4a4a" text-anchor="middle" font-family="Liberation Sans" stroke="#555" stroke-width="0.25">5.00</text><rect x="1082.7" y="488.79999999999995" width="9" height="5.2" fill="#fff"/><text x="1087.2" y="492.9" font-size="4.2" fill="#4a4a4a" text-anchor="middle" font-family="Liberation Sans" stroke="#555" stroke-width="0.25">5.00</text><rect x="840.2" y="592.0" width="9" height="5.2" fill="#fff"/><text x="844.7" y="596.1" font-size="4.2" fill="#4a4a4a" text-anchor="middle" font-family="Liberation Sans" stroke="#555" stroke-width="0.25">5.00</text><rect x="852.5" y="592.0" width="9" height="5.2" fill="#fff"/><text x="857.0" y="596.1" font-size="4.2" fill="#4a4a4a" text-anchor="middle" font-family="Liberation Sans" stroke="#555" stroke-width="0.25">5.00</text><rect x="1066.8" y="592.0" width="9" height="5.2" fill="#fff"/><text x="1071.3" y="596.1" font-size="4.2" fill="#4a4a4a" text-anchor="middle" font-family="Liberation Sans" stroke="#555" stroke-width="0.25">5.00</text><rect x="1082.7" y="592.0" width="9" height="5.2" fill="#fff"/><text x="1087.2" y="596.1" font-size="4.2" fill="#4a4a4a" text-anchor="middle" font-family="Liberation Sans" stroke="#555" stroke-width="0.25">5.00</text><rect x="882.4" y="98" width="6.399999999999977" height="580.0" fill="#7a7a7a"/><line x1="882.5" y1="98" x2="882.5" y2="678.0" stroke="#141414" stroke-width="1.9"/><line x1="885.5" y1="98" x2="885.5" y2="678.0" stroke="#141414" stroke-width="1.4"/><line x1="888.5" y1="98" x2="888.5" y2="678.0" stroke="#141414" stroke-width="1.9"/><line x1="885.5" y1="94" x2="885.5" y2="98" stroke="#141414" stroke-width="1"/><rect x="959.4" y="98" width="6.2000000000000455" height="580.0" fill="#7a7a7a"/><line x1="959.5" y1="98" x2="959.5" y2="678.0" stroke="#141414" stroke-width="1.9"/><line x1="962.5" y1="98" x2="962.5" y2="678.0" stroke="#141414" stroke-width="1.4"/><line x1="965.5" y1="98" x2="965.5" y2="678.0" stroke="#141414" stroke-width="1.9"/><line x1="962.5" y1="94" x2="962.5" y2="98" stroke="#141414" stroke-width="1"/><rect x="1042.5" y="98" width="6.2999999999999545" height="580.0" fill="#7a7a7a"/><line x1="1042.5" y1="98" x2="1042.5" y2="678.0" stroke="#141414" stroke-width="1.9"/><line x1="1045.5" y1="98" x2="1045.5" y2="678.0" stroke="#141414" stroke-width="1.4"/><line x1="1048.5" y1="98" x2="1048.5" y2="678.0" stroke="#141414" stroke-width="1.9"/><line x1="1045.5" y1="94" x2="1045.5" y2="98" stroke="#141414" stroke-width="1"/><rect x="883.1999999999999" y="98.6" width="4.799999999999978" height="6.099999999999997" fill="#fff"/><line x1="885.5" y1="98.0" x2="885.5" y2="105.3" stroke="#555" stroke-width="0.8"/><line x1="878.9" y1="102.5" x2="892.3" y2="102.5" stroke="#141414" stroke-width="1.1"/><rect x="960.1999999999999" y="98.6" width="4.600000000000046" height="6.099999999999997" fill="#fff"/><line x1="962.5" y1="98.0" x2="962.5" y2="105.3" stroke="#555" stroke-width="0.8"/><line x1="955.9" y1="102.5" x2="969.1" y2="102.5" stroke="#141414" stroke-width="1.1"/><rect x="1043.3" y="98.6" width="4.699999999999955" height="6.099999999999997" fill="#fff"/><line x1="1045.5" y1="98.0" x2="1045.5" y2="105.3" stroke="#555" stroke-width="0.8"/><line x1="1039.0" y1="102.5" x2="1052.3" y2="102.5" stroke="#141414" stroke-width="1.1"/><line x1="888.8" y1="98.5" x2="959.4" y2="98.5" stroke="#141414" stroke-width="1.2"/><line x1="888.8" y1="105.5" x2="959.4" y2="105.5" stroke="#141414" stroke-width="1.2"/><line x1="965.6" y1="98.5" x2="1042.5" y2="98.5" stroke="#141414" stroke-width="1.2"/><line x1="965.6" y1="105.5" x2="1042.5" y2="105.5" stroke="#141414" stroke-width="1.2"/><text x="920.3" y="104.5" font-size="5.6" fill="#555" text-anchor="middle" font-family="Liberation Sans" letter-spacing="0.25" stroke="#666" stroke-width="0.35">VIGA DE AMARRE</text><text x="1000.5" y="104.5" font-size="5.4" fill="#555" text-anchor="middle" font-family="Liberation Sans" stroke="#666" stroke-width="0.3">-107-207-307-(0.25x0.35)</text><rect x="883.1999999999999" y="192.2" width="4.799999999999978" height="6.2000000000000055" fill="#fff"/><line x1="885.5" y1="191.6" x2="885.5" y2="199.0" stroke="#555" stroke-width="0.8"/><line x1="878.9" y1="196.5" x2="892.3" y2="196.5" stroke="#141414" stroke-width="1.1"/><rect x="960.1999999999999" y="192.2" width="4.600000000000046" height="6.2000000000000055" fill="#fff"/><line x1="962.5" y1="191.6" x2="962.5" y2="199.0" stroke="#555" stroke-width="0.8"/><line x1="955.9" y1="196.5" x2="969.1" y2="196.5" stroke="#141414" stroke-width="1.1"/><rect x="1043.3" y="192.2" width="4.699999999999955" height="6.2000000000000055" fill="#fff"/><line x1="1045.5" y1="191.6" x2="1045.5" y2="199.0" stroke="#555" stroke-width="0.8"/><line x1="1039.0" y1="196.5" x2="1052.3" y2="196.5" stroke="#141414" stroke-width="1.1"/><line x1="888.8" y1="191.5" x2="959.4" y2="191.5" stroke="#141414" stroke-width="1.2"/><line x1="888.8" y1="199.5" x2="959.4" y2="199.5" stroke="#141414" stroke-width="1.2"/><line x1="965.6" y1="191.5" x2="1042.5" y2="191.5" stroke="#141414" stroke-width="1.2"/><line x1="965.6" y1="199.5" x2="1042.5" y2="199.5" stroke="#141414" stroke-width="1.2"/><text x="920.3" y="198.0" font-size="5.6" fill="#555" text-anchor="middle" font-family="Liberation Sans" letter-spacing="0.25" stroke="#666" stroke-width="0.35">VIGA DE AMARRE</text><text x="1000.5" y="198.0" font-size="5.4" fill="#555" text-anchor="middle" font-family="Liberation Sans" stroke="#666" stroke-width="0.3">-106-206-306-(0.25x0.35)</text><rect x="883.1999999999999" y="294.0" width="4.799999999999978" height="5.700000000000034" fill="#fff"/><line x1="885.5" y1="293.4" x2="885.5" y2="300.3" stroke="#555" stroke-width="0.8"/><line x1="878.9" y1="296.5" x2="892.3" y2="296.5" stroke="#141414" stroke-width="1.1"/><rect x="960.1999999999999" y="294.0" width="4.600000000000046" height="5.700000000000034" fill="#fff"/><line x1="962.5" y1="293.4" x2="962.5" y2="300.3" stroke="#555" stroke-width="0.8"/><line x1="955.9" y1="296.5" x2="969.1" y2="296.5" stroke="#141414" stroke-width="1.1"/><rect x="1043.3" y="294.0" width="4.699999999999955" height="5.700000000000034" fill="#fff"/><line x1="1045.5" y1="293.4" x2="1045.5" y2="300.3" stroke="#555" stroke-width="0.8"/><line x1="1039.0" y1="296.5" x2="1052.3" y2="296.5" stroke="#141414" stroke-width="1.1"/><line x1="888.8" y1="293.5" x2="959.4" y2="293.5" stroke="#141414" stroke-width="1.2"/><line x1="888.8" y1="300.5" x2="959.4" y2="300.5" stroke="#141414" stroke-width="1.2"/><line x1="965.6" y1="293.5" x2="1042.5" y2="293.5" stroke="#141414" stroke-width="1.2"/><line x1="965.6" y1="300.5" x2="1042.5" y2="300.5" stroke="#141414" stroke-width="1.2"/><text x="920.3" y="298.6" font-size="5.6" fill="#555" text-anchor="middle" font-family="Liberation Sans" letter-spacing="0.25" stroke="#666" stroke-width="0.35">VIGA DE AMARRE</text><text x="1000.5" y="298.6" font-size="5.4" fill="#555" text-anchor="middle" font-family="Liberation Sans" stroke="#666" stroke-width="0.3">-105-205-305-(0.25x0.35)</text><rect x="883.1999999999999" y="377.8" width="4.799999999999978" height="5.9999999999999885" fill="#fff"/><line x1="885.5" y1="377.2" x2="885.5" y2="384.4" stroke="#555" stroke-width="0.8"/><line x1="878.9" y1="380.5" x2="892.3" y2="380.5" stroke="#141414" stroke-width="1.1"/><rect x="960.1999999999999" y="377.8" width="4.600000000000046" height="5.9999999999999885" fill="#fff"/><line x1="962.5" y1="377.2" x2="962.5" y2="384.4" stroke="#555" stroke-width="0.8"/><line x1="955.9" y1="380.5" x2="969.1" y2="380.5" stroke="#141414" stroke-width="1.1"/><rect x="1043.3" y="377.8" width="4.699999999999955" height="5.9999999999999885" fill="#fff"/><line x1="1045.5" y1="377.2" x2="1045.5" y2="384.4" stroke="#555" stroke-width="0.8"/><line x1="1039.0" y1="380.5" x2="1052.3" y2="380.5" stroke="#141414" stroke-width="1.1"/><line x1="888.8" y1="377.5" x2="959.4" y2="377.5" stroke="#141414" stroke-width="1.2"/><line x1="888.8" y1="384.5" x2="959.4" y2="384.5" stroke="#141414" stroke-width="1.2"/><line x1="965.6" y1="377.5" x2="1042.5" y2="377.5" stroke="#141414" stroke-width="1.2"/><line x1="965.6" y1="384.5" x2="1042.5" y2="384.5" stroke="#141414" stroke-width="1.2"/><text x="922" y="382.1" font-size="5.4" fill="#555" text-anchor="middle" font-family="Liberation Sans" letter-spacing="0.2" stroke="#666" stroke-width="0.3">V.A.-104-204-304-</text><text x="1005.5" y="382.1" font-size="5.4" fill="#555" text-anchor="middle" font-family="Liberation Sans" stroke="#666" stroke-width="0.3">(0.25x0.35)</text><rect x="883.1999999999999" y="441.6" width="4.799999999999978" height="6.199999999999977" fill="#fff"/><line x1="885.5" y1="441.0" x2="885.5" y2="448.4" stroke="#555" stroke-width="0.8"/><line x1="878.9" y1="445.5" x2="892.3" y2="445.5" stroke="#141414" stroke-width="1.1"/><rect x="960.1999999999999" y="441.6" width="4.600000000000046" height="6.199999999999977" fill="#fff"/><line x1="962.5" y1="441.0" x2="962.5" y2="448.4" stroke="#555" stroke-width="0.8"/><line x1="955.9" y1="445.5" x2="969.1" y2="445.5" stroke="#141414" stroke-width="1.1"/><rect x="1043.3" y="441.6" width="4.699999999999955" height="6.199999999999977" fill="#fff"/><line x1="1045.5" y1="441.0" x2="1045.5" y2="448.4" stroke="#555" stroke-width="0.8"/><line x1="1039.0" y1="445.5" x2="1052.3" y2="445.5" stroke="#141414" stroke-width="1.1"/><line x1="888.8" y1="441.5" x2="959.4" y2="441.5" stroke="#141414" stroke-width="1.2"/><line x1="888.8" y1="448.5" x2="959.4" y2="448.5" stroke="#141414" stroke-width="1.2"/><line x1="965.6" y1="441.5" x2="1042.5" y2="441.5" stroke="#141414" stroke-width="1.2"/><line x1="965.6" y1="448.5" x2="1042.5" y2="448.5" stroke="#141414" stroke-width="1.2"/><text x="922" y="447.3" font-size="5.4" fill="#555" text-anchor="middle" font-family="Liberation Sans" letter-spacing="0.2" stroke="#666" stroke-width="0.3">V.A.-103-203-303-</text><text x="1005.5" y="447.3" font-size="5.4" fill="#555" text-anchor="middle" font-family="Liberation Sans" stroke="#666" stroke-width="0.3">(0.25x0.35)</text><rect x="883.1999999999999" y="534.0" width="4.799999999999978" height="5.699999999999977" fill="#fff"/><line x1="885.5" y1="533.4" x2="885.5" y2="540.3" stroke="#555" stroke-width="0.8"/><line x1="878.9" y1="537.5" x2="892.3" y2="537.5" stroke="#141414" stroke-width="1.1"/><rect x="960.1999999999999" y="534.0" width="4.600000000000046" height="5.699999999999977" fill="#fff"/><line x1="962.5" y1="533.4" x2="962.5" y2="540.3" stroke="#555" stroke-width="0.8"/><line x1="955.9" y1="537.5" x2="969.1" y2="537.5" stroke="#141414" stroke-width="1.1"/><rect x="1043.3" y="534.0" width="4.699999999999955" height="5.699999999999977" fill="#fff"/><line x1="1045.5" y1="533.4" x2="1045.5" y2="540.3" stroke="#555" stroke-width="0.8"/><line x1="1039.0" y1="537.5" x2="1052.3" y2="537.5" stroke="#141414" stroke-width="1.1"/><line x1="888.8" y1="533.5" x2="959.4" y2="533.5" stroke="#141414" stroke-width="1.2"/><line x1="888.8" y1="540.5" x2="959.4" y2="540.5" stroke="#141414" stroke-width="1.2"/><line x1="965.6" y1="533.5" x2="1042.5" y2="533.5" stroke="#141414" stroke-width="1.2"/><line x1="965.6" y1="540.5" x2="1042.5" y2="540.5" stroke="#141414" stroke-width="1.2"/><text x="920.3" y="539.5" font-size="5.6" fill="#555" text-anchor="middle" font-family="Liberation Sans" letter-spacing="0.25" stroke="#666" stroke-width="0.35">VIGA DE AMARRE</text><text x="1000.5" y="539.5" font-size="5.4" fill="#555" text-anchor="middle" font-family="Liberation Sans" stroke="#666" stroke-width="0.3">-102-202-302-(0.25x0.35)</text><rect x="883.1999999999999" y="649.5" width="4.799999999999978" height="6.3" fill="#fff"/><line x1="885.5" y1="648.9" x2="885.5" y2="656.4" stroke="#555" stroke-width="0.8"/><line x1="878.9" y1="651.5" x2="892.3" y2="651.5" stroke="#141414" stroke-width="1.1"/><rect x="960.1999999999999" y="649.5" width="4.600000000000046" height="6.3" fill="#fff"/><line x1="962.5" y1="648.9" x2="962.5" y2="656.4" stroke="#555" stroke-width="0.8"/><line x1="955.9" y1="651.5" x2="969.1" y2="651.5" stroke="#141414" stroke-width="1.1"/><rect x="1043.3" y="649.5" width="4.699999999999955" height="6.3" fill="#fff"/><line x1="1045.5" y1="648.9" x2="1045.5" y2="656.4" stroke="#555" stroke-width="0.8"/><line x1="1039.0" y1="651.5" x2="1052.3" y2="651.5" stroke="#141414" stroke-width="1.1"/><line x1="888.8" y1="648.5" x2="959.4" y2="648.5" stroke="#141414" stroke-width="1.2"/><line x1="888.8" y1="656.5" x2="959.4" y2="656.5" stroke="#141414" stroke-width="1.2"/><line x1="965.6" y1="648.5" x2="1042.5" y2="648.5" stroke="#141414" stroke-width="1.2"/><line x1="965.6" y1="656.5" x2="1042.5" y2="656.5" stroke="#141414" stroke-width="1.2"/><text x="920.3" y="653.7" font-size="5.6" fill="#555" text-anchor="middle" font-family="Liberation Sans" letter-spacing="0.25" stroke="#666" stroke-width="0.35">VIGA DE AMARRE</text><text x="1000.5" y="653.7" font-size="5.4" fill="#555" text-anchor="middle" font-family="Liberation Sans" stroke="#666" stroke-width="0.3">-101-201-301-(0.25x0.35)</text><line x1="882.4" y1="678.5" x2="1048.8" y2="678.5" stroke="#141414" stroke-width="1.3"/><line x1="882.4" y1="704.5" x2="1048.8" y2="704.5" stroke="#141414" stroke-width="1.1"/><line x1="882.5" y1="700.9" x2="882.5" y2="707.9" stroke="#141414" stroke-width="1.1"/><line x1="888.5" y1="700.9" x2="888.5" y2="707.9" stroke="#141414" stroke-width="1.1"/><line x1="959.5" y1="700.9" x2="959.5" y2="707.9" stroke="#141414" stroke-width="1.1"/><line x1="965.5" y1="700.9" x2="965.5" y2="707.9" stroke="#141414" stroke-width="1.1"/><line x1="1042.5" y1="700.9" x2="1042.5" y2="707.9" stroke="#141414" stroke-width="1.1"/><line x1="1048.5" y1="700.9" x2="1048.5" y2="707.9" stroke="#141414" stroke-width="1.1"/><rect x="921" y="702.4" width="8" height="4" fill="#fff"/><rect x="922.0" y="703.4" width="6" height="2" fill="#7a7a7a"/><rect x="1001" y="702.4" width="8" height="4" fill="#fff"/><rect x="1002.0" y="703.4" width="6" height="2" fill="#7a7a7a"/></g></svg>
<div class="a" style="left:1256px;top:83px;width:16px;height:628px;background:#efefef;"></div>
<svg style="left:1259px;top:89px" width="10" height="7"><path d="M1 6L5 2l4 4" fill="none" stroke="#c4c4c4" stroke-width="1.5"/></svg>
<svg style="left:1259px;top:702px" width="10" height="7"><path d="M1 1l4 4 4-4" fill="none" stroke="#c4c4c4" stroke-width="1.5"/></svg>
<div class="a" style="left:640px;top:718px;width:640px;height:2px;background:#b48a7a;"></div>
<svg style="left:0;top:0" width="1280" height="720"><path d="M635.5 404.5V417l3-3 2.6 5.6 2.2-1-2.6-5.4h4.3z" fill="#000" stroke="#fff" stroke-width="0.8"/></svg>
</body></html>
